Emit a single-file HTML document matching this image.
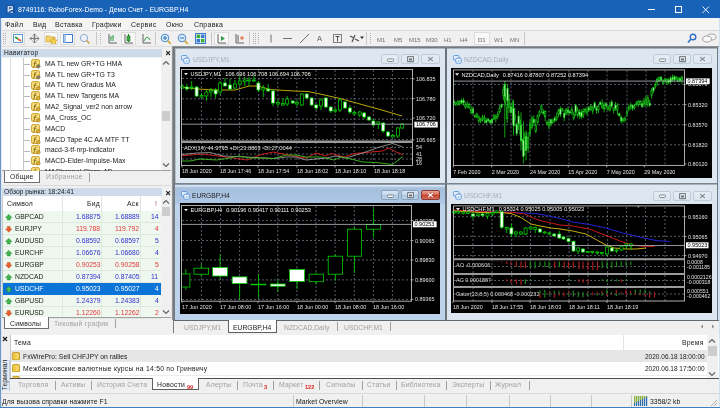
<!DOCTYPE html><html><head><meta charset="utf-8"><style>
html,body{margin:0;padding:0;} body{width:720px;height:408px;position:relative;overflow:hidden;background:#f0f0f0;font-family:"Liberation Sans", sans-serif;-webkit-font-smoothing:antialiased;} .t{will-change:transform;} svg{will-change:transform;} div{box-sizing:border-box;} svg{position:absolute;}
</style></head><body>
<div style="position:absolute;left:0px;top:0px;width:720px;height:18px;background:#1862b8;"></div>
<div style="position:absolute;left:6px;top:4.5px;width:8.5px;height:8.5px;background:#1552a2;"></div>
<svg style="left:6px;top:4.5px" width="9" height="9"><path d="M2.2 7.3V1.8h4v2.6H3.8v1.8" stroke="#fff" stroke-width="1.1" fill="none"/><path d="M4.5 7.2h2.5" stroke="#fff" stroke-width="1"/></svg>
<div class="t" style="position:absolute;left:18px;top:6.8px;font-size:6.9px;line-height:6.9px;color:#fff;white-space:pre;letter-spacing:0px;">8749116: RoboForex-Demo - Демо Счет - EURGBP,H4</div>
<div style="position:absolute;left:648px;top:9px;width:7px;height:1px;background:#fff;"></div>
<div style="position:absolute;left:675px;top:6px;width:7px;height:7px;border:1px solid #fff;"></div>
<svg style="left:702px;top:6px" width="8" height="8"><path d="M0.5 0.5L7 7M7 0.5L0.5 7" stroke="#fff" stroke-width="0.9"/></svg>
<div style="position:absolute;left:1px;top:18px;width:718px;height:12px;background:#f4f4f4;"></div>
<div style="position:absolute;left:1px;top:30px;width:718px;height:1px;background:#d9d9d9;"></div>
<div class="t" style="position:absolute;left:5px;top:21px;font-size:7px;line-height:7px;color:#1a1a1a;white-space:pre;letter-spacing:0.25px;">Файл</div>
<div class="t" style="position:absolute;left:33px;top:21px;font-size:7px;line-height:7px;color:#1a1a1a;white-space:pre;letter-spacing:0.25px;">Вид</div>
<div class="t" style="position:absolute;left:55px;top:21px;font-size:7px;line-height:7px;color:#1a1a1a;white-space:pre;letter-spacing:0.25px;">Вставка</div>
<div class="t" style="position:absolute;left:92px;top:21px;font-size:7px;line-height:7px;color:#1a1a1a;white-space:pre;letter-spacing:0.25px;">Графики</div>
<div class="t" style="position:absolute;left:131px;top:21px;font-size:7px;line-height:7px;color:#1a1a1a;white-space:pre;letter-spacing:0.25px;">Сервис</div>
<div class="t" style="position:absolute;left:166px;top:21px;font-size:7px;line-height:7px;color:#1a1a1a;white-space:pre;letter-spacing:0.25px;">Окно</div>
<div class="t" style="position:absolute;left:194px;top:21px;font-size:7px;line-height:7px;color:#1a1a1a;white-space:pre;letter-spacing:0.25px;">Справка</div>
<div style="position:absolute;left:1px;top:31px;width:718px;height:15px;background:#f0f0f0;"></div>
<div style="position:absolute;left:1px;top:45.5px;width:718px;height:1.5px;background:#dcdcdc;"></div>
<div style="position:absolute;left:0px;top:18px;width:1px;height:390px;background:#7397bd;"></div>
<div style="position:absolute;left:719px;top:18px;width:1px;height:390px;background:#7397bd;"></div>
<div style="position:absolute;left:0px;top:407px;width:720px;height:1px;background:#3f7fc4;"></div>
<div style="position:absolute;left:3px;top:33px;width:1px;height:11px;background:repeating-linear-gradient(#b0b0b0 0 1px, transparent 1px 2px);"></div>
<div style="position:absolute;left:5px;top:33px;width:1px;height:11px;background:repeating-linear-gradient(#b0b0b0 0 1px, transparent 1px 2px);"></div>
<div style="position:absolute;left:11px;top:32px;width:14px;height:13px;background:#f8f8f8;border:1px solid #dcdcdc;"></div>
<div style="position:absolute;left:44px;top:32px;width:14px;height:13px;background:#f8f8f8;border:1px solid #dcdcdc;"></div>
<div style="position:absolute;left:60px;top:32px;width:15px;height:13px;background:#f8f8f8;border:1px solid #dcdcdc;"></div>
<svg style="left:12px;top:33px" width="12" height="11"><rect x="1.5" y="1.5" width="9" height="8" fill="#fff" stroke="#5b9bd5"/><path d="M3 4l3 2" stroke="#2ea043" stroke-width="2"/><path d="M6 6l3 2" stroke="#e06040" stroke-width="2"/></svg>
<svg style="left:29px;top:33px" width="11" height="11"><path d="M5.5 1v9M1 5.5h9" stroke="#707070" stroke-width="0.9"/><path d="M3.8 2.7L5.5 1 7.2 2.7M3.8 8.3L5.5 10 7.2 8.3M2.7 3.8L1 5.5 2.7 7.2M8.3 3.8L10 5.5 8.3 7.2" stroke="#707070" stroke-width="0.9" fill="none"/><path d="M3.5 3.5L7.5 7.5M7.5 3.5L3.5 7.5" stroke="#909090" stroke-width="0.6"/></svg>
<svg style="left:45px;top:33px" width="13" height="11"><path d="M1 3h4l1 1h4v5H1z" fill="#f3d36b" stroke="#c9a23a" stroke-width="0.7"/><path d="M8.5 4.5l1.2 2.3 2.5.3-1.8 1.7.5 2.4-2.4-1.2-2.2 1.2.4-2.4-1.8-1.7 2.5-.3z" fill="#f5d547" stroke="#b89020" stroke-width="0.5"/></svg>
<svg style="left:62px;top:33px" width="12" height="11"><rect x="1.5" y="1.5" width="9" height="8" fill="#fff" stroke="#3c78c8"/><rect x="1.5" y="1.5" width="2.5" height="8" fill="#a8c8ec"/></svg>
<svg style="left:79px;top:33px" width="12" height="11"><circle cx="5" cy="5" r="3.6" fill="#eef3fa" stroke="#8aa7c8"/><path d="M7.5 7.5l3 3" stroke="#c9a23a" stroke-width="1.5"/></svg>
<div style="position:absolute;left:96px;top:32px;width:1px;height:13px;background:#c8c8c8;"></div>
<div style="position:absolute;left:100px;top:33px;width:1px;height:11px;background:repeating-linear-gradient(#b0b0b0 0 1px, transparent 1px 2px);"></div>
<svg style="left:107px;top:33px" width="11" height="11"><path d="M2 1v9h8" stroke="#606060" fill="none"/><path d="M4 3v5M4 5h-1M6 2v6M6 4h1" stroke="#2ea043"/></svg>
<div style="position:absolute;left:121px;top:32px;width:15px;height:13px;background:#f8f8f8;border:1px solid #dcdcdc;"></div>
<svg style="left:123px;top:33px" width="11" height="11"><path d="M2 1v9h8" stroke="#606060" fill="none"/><rect x="4" y="3" width="3" height="5" fill="#3cb040" stroke="#207020" stroke-width="0.6"/><path d="M5.5 1v2M5.5 8v1" stroke="#207020"/></svg>
<svg style="left:141px;top:33px" width="11" height="11"><path d="M2 1v9h8" stroke="#606060" fill="none"/><path d="M3 8q3-7 6-1" stroke="#2ea043" fill="none"/></svg>
<div style="position:absolute;left:155px;top:32px;width:1px;height:13px;background:#c8c8c8;"></div>
<svg style="left:160px;top:33px" width="12" height="12"><circle cx="5" cy="5" r="3.8" fill="#d9ecfb" stroke="#4a8ac8"/><path d="M3 5h4M5 3v4" stroke="#2f6fb8"/><path d="M7.8 7.8l3 3" stroke="#d4a93a" stroke-width="1.8"/></svg>
<svg style="left:177px;top:33px" width="12" height="12"><circle cx="5" cy="5" r="3.8" fill="#d9ecfb" stroke="#4a8ac8"/><path d="M3 5h4" stroke="#2f6fb8"/><path d="M7.8 7.8l3 3" stroke="#d4a93a" stroke-width="1.8"/></svg>
<svg style="left:195px;top:33px" width="11" height="11"><rect x="0.5" y="0.5" width="10" height="10" fill="#fff" stroke="#3a7ad0"/><rect x="1.5" y="1.5" width="3.6" height="3.6" fill="#3cae3c"/><rect x="5.9" y="1.5" width="3.6" height="3.6" fill="#3a7ad0"/><rect x="1.5" y="5.9" width="3.6" height="3.6" fill="#3a7ad0"/><rect x="5.9" y="5.9" width="3.6" height="3.6" fill="#3cae3c"/></svg>
<div style="position:absolute;left:211px;top:32px;width:1px;height:13px;background:#c8c8c8;"></div>
<div style="position:absolute;left:214px;top:32px;width:15px;height:13px;background:#f8f8f8;border:1px solid #dcdcdc;"></div>
<svg style="left:216px;top:33px" width="11" height="11"><path d="M2 1v9h8" stroke="#606060" fill="none"/><path d="M5 3l4 2.5-4 2.5z" fill="#2ea043"/></svg>
<svg style="left:234px;top:33px" width="11" height="11"><path d="M2 1v9h8M4 2v7" stroke="#606060" fill="none"/><path d="M6 5h4M8 3v4" stroke="#e06030"/></svg>
<div style="position:absolute;left:249px;top:32px;width:1px;height:13px;background:#c8c8c8;"></div>
<div style="position:absolute;left:253px;top:33px;width:1px;height:11px;background:repeating-linear-gradient(#b0b0b0 0 1px, transparent 1px 2px);"></div>
<div style="position:absolute;left:255px;top:33px;width:1px;height:11px;background:repeating-linear-gradient(#b0b0b0 0 1px, transparent 1px 2px);"></div>
<div style="position:absolute;left:258px;top:33px;width:1px;height:11px;background:repeating-linear-gradient(#b0b0b0 0 1px, transparent 1px 2px);"></div>
<svg style="left:268px;top:33px" width="6" height="11"><path d="M3 1.5v8" stroke="#707070"/></svg>
<svg style="left:282px;top:33px" width="11" height="11"><path d="M1 5.5h9" stroke="#707070"/></svg>
<svg style="left:299px;top:33px" width="11" height="11"><path d="M1 10L10 1" stroke="#707070"/></svg>
<div class="t" style="position:absolute;left:317px;top:35px;font-size:7.5px;line-height:7.5px;color:#606060;white-space:pre;">A</div>
<svg style="left:332px;top:33px" width="11" height="11"><rect x="1.5" y="1.5" width="8" height="8" fill="none" stroke="#808080"/><path d="M3.5 3.5h4M5.5 3.5v5" stroke="#505050"/></svg>
<svg style="left:349px;top:33px" width="11" height="11"><path d="M1 3l4 2M6 6l4 2M3 9l3-7" stroke="#505050" stroke-width="1.2"/></svg>
<svg style="left:360px;top:36px" width="5" height="4"><path d="M0 0.5h4l-2 2.5z" fill="#303030"/></svg>
<div style="position:absolute;left:366px;top:32px;width:1px;height:13px;background:#c8c8c8;"></div>
<div style="position:absolute;left:370px;top:33px;width:1px;height:11px;background:repeating-linear-gradient(#b0b0b0 0 1px, transparent 1px 2px);"></div>
<div class="t" style="position:absolute;left:377px;top:36.5px;font-size:6px;line-height:6px;color:#707070;white-space:pre;">M1</div>
<div class="t" style="position:absolute;left:394px;top:36.5px;font-size:6px;line-height:6px;color:#707070;white-space:pre;">M5</div>
<div class="t" style="position:absolute;left:409px;top:36.5px;font-size:6px;line-height:6px;color:#707070;white-space:pre;">M15</div>
<div class="t" style="position:absolute;left:426px;top:36.5px;font-size:6px;line-height:6px;color:#707070;white-space:pre;">M30</div>
<div class="t" style="position:absolute;left:444px;top:36.5px;font-size:6px;line-height:6px;color:#707070;white-space:pre;">H1</div>
<div class="t" style="position:absolute;left:460px;top:36.5px;font-size:6px;line-height:6px;color:#707070;white-space:pre;">H4</div>
<div class="t" style="position:absolute;left:478px;top:36.5px;font-size:6px;line-height:6px;color:#707070;white-space:pre;">D1</div>
<div class="t" style="position:absolute;left:494px;top:36.5px;font-size:6px;line-height:6px;color:#707070;white-space:pre;">W1</div>
<div class="t" style="position:absolute;left:510px;top:36.5px;font-size:6px;line-height:6px;color:#707070;white-space:pre;">MN</div>
<div style="position:absolute;left:474px;top:32px;width:16px;height:13px;background:#f8f8f8;border:1px solid #dcdcdc;"></div>
<div class="t" style="position:absolute;left:478px;top:36.5px;font-size:6px;line-height:6px;color:#606060;white-space:pre;">D1</div>
<div style="position:absolute;left:524px;top:32px;width:1px;height:13px;background:#c8c8c8;"></div>
<svg style="left:687px;top:33px" width="10" height="11"><circle cx="6" cy="4" r="2.8" fill="none" stroke="#2f6fc8" stroke-width="1.4"/><path d="M4 6l-3 3.5" stroke="#2f6fc8" stroke-width="1.6"/></svg>
<svg style="left:702px;top:33px" width="15" height="11"><ellipse cx="9.5" cy="4" rx="4.5" ry="3" fill="#f4f4f4" stroke="#a0a0a0"/><ellipse cx="5" cy="6" rx="4.3" ry="3" fill="#f8f8f8" stroke="#a0a0a0"/></svg>
<div style="position:absolute;left:1px;top:47px;width:171px;height:285px;background:#f0f0f0;"></div>
<div style="position:absolute;left:171px;top:47px;width:3px;height:274px;background:#e6e6e6;"></div>
<div style="position:absolute;left:1px;top:48.5px;width:161px;height:8.5px;background:#cddbea;"></div>
<div class="t" style="position:absolute;left:4px;top:49.5px;font-size:6.7px;line-height:6.7px;color:#1a1a1a;white-space:pre;letter-spacing:0.25px;">Навигатор</div>
<svg style="left:165px;top:50px" width="7" height="7"><path d="M1.2 1.2L5 5M5 1.2L1.2 5" stroke="#202020" stroke-width="1.1"/></svg>
<div style="position:absolute;left:1px;top:57.5px;width:170px;height:113.5px;background:#fff;"></div>
<div style="position:absolute;left:1px;top:170px;width:170px;height:1px;background:#a0a0a0;"></div>
<div style="position:absolute;left:10px;top:57.5px;width:1px;height:113px;background:#dcdcdc;"></div>
<div style="position:absolute;left:23px;top:57.5px;width:1px;height:113px;background:#c4c4c4;"></div>
<div style="position:absolute;left:24px;top:64.0px;width:6px;height:0.9px;background:#b8b8b8;"></div>
<svg style="left:31px;top:58.8px" width="10" height="10"><rect x="0.5" y="0.5" width="8" height="8" rx="1.5" fill="#f6dc78" stroke="#d0aa40"/><path d="M5.5 2.2q-1.5-.3-1.7 1.2l-.6 3.8q-.3 1-1.2.8M2.8 4.3h2.5" stroke="#7a5a10" stroke-width="0.8" fill="none"/><circle cx="7.3" cy="7.3" r="1.8" fill="#808080" stroke="#806010" stroke-width="0.5"/></svg>
<div class="t" style="position:absolute;left:44.5px;top:60.8px;font-size:6.9px;line-height:6.9px;color:#1a1a1a;white-space:pre;">MA TL new GR+TG HMA</div>
<div style="position:absolute;left:24px;top:74.83px;width:6px;height:0.9px;background:#b8b8b8;"></div>
<svg style="left:31px;top:69.6px" width="10" height="10"><rect x="0.5" y="0.5" width="8" height="8" rx="1.5" fill="#f6dc78" stroke="#d0aa40"/><path d="M5.5 2.2q-1.5-.3-1.7 1.2l-.6 3.8q-.3 1-1.2.8M2.8 4.3h2.5" stroke="#7a5a10" stroke-width="0.8" fill="none"/><circle cx="7.3" cy="7.3" r="1.8" fill="#808080" stroke="#806010" stroke-width="0.5"/></svg>
<div class="t" style="position:absolute;left:44.5px;top:71.63000000000001px;font-size:6.9px;line-height:6.9px;color:#1a1a1a;white-space:pre;">MA TL new GR+TG T3</div>
<div style="position:absolute;left:24px;top:85.66px;width:6px;height:0.9px;background:#b8b8b8;"></div>
<svg style="left:31px;top:80.5px" width="10" height="10"><rect x="0.5" y="0.5" width="8" height="8" rx="1.5" fill="#f6dc78" stroke="#d0aa40"/><path d="M5.5 2.2q-1.5-.3-1.7 1.2l-.6 3.8q-.3 1-1.2.8M2.8 4.3h2.5" stroke="#7a5a10" stroke-width="0.8" fill="none"/><circle cx="7.3" cy="7.3" r="1.8" fill="#e0b030" stroke="#806010" stroke-width="0.5"/></svg>
<div class="t" style="position:absolute;left:44.5px;top:82.46000000000001px;font-size:6.9px;line-height:6.9px;color:#1a1a1a;white-space:pre;">MA TL new Gradus MA</div>
<div style="position:absolute;left:24px;top:96.49px;width:6px;height:0.9px;background:#b8b8b8;"></div>
<svg style="left:31px;top:91.3px" width="10" height="10"><rect x="0.5" y="0.5" width="8" height="8" rx="1.5" fill="#f6dc78" stroke="#d0aa40"/><path d="M5.5 2.2q-1.5-.3-1.7 1.2l-.6 3.8q-.3 1-1.2.8M2.8 4.3h2.5" stroke="#7a5a10" stroke-width="0.8" fill="none"/><circle cx="7.3" cy="7.3" r="1.8" fill="#e0b030" stroke="#806010" stroke-width="0.5"/></svg>
<div class="t" style="position:absolute;left:44.5px;top:93.29px;font-size:6.9px;line-height:6.9px;color:#1a1a1a;white-space:pre;">MA TL new Tangens MA</div>
<div style="position:absolute;left:24px;top:107.32px;width:6px;height:0.9px;background:#b8b8b8;"></div>
<svg style="left:31px;top:102.1px" width="10" height="10"><rect x="0.5" y="0.5" width="8" height="8" rx="1.5" fill="#f6dc78" stroke="#d0aa40"/><path d="M5.5 2.2q-1.5-.3-1.7 1.2l-.6 3.8q-.3 1-1.2.8M2.8 4.3h2.5" stroke="#7a5a10" stroke-width="0.8" fill="none"/><circle cx="7.3" cy="7.3" r="1.8" fill="#e0b030" stroke="#806010" stroke-width="0.5"/></svg>
<div class="t" style="position:absolute;left:44.5px;top:104.12px;font-size:6.9px;line-height:6.9px;color:#1a1a1a;white-space:pre;">MA2_Signal_ver2 non arrow</div>
<div style="position:absolute;left:24px;top:118.14999999999999px;width:6px;height:0.9px;background:#b8b8b8;"></div>
<svg style="left:31px;top:113.0px" width="10" height="10"><rect x="0.5" y="0.5" width="8" height="8" rx="1.5" fill="#f6dc78" stroke="#d0aa40"/><path d="M5.5 2.2q-1.5-.3-1.7 1.2l-.6 3.8q-.3 1-1.2.8M2.8 4.3h2.5" stroke="#7a5a10" stroke-width="0.8" fill="none"/><circle cx="7.3" cy="7.3" r="1.8" fill="#e0b030" stroke="#806010" stroke-width="0.5"/></svg>
<div class="t" style="position:absolute;left:44.5px;top:114.95px;font-size:6.9px;line-height:6.9px;color:#1a1a1a;white-space:pre;">MA_Cross_OC</div>
<div style="position:absolute;left:24px;top:128.98px;width:6px;height:0.9px;background:#b8b8b8;"></div>
<svg style="left:31px;top:123.8px" width="10" height="10"><rect x="0.5" y="0.5" width="8" height="8" rx="1.5" fill="#f6dc78" stroke="#d0aa40"/><path d="M5.5 2.2q-1.5-.3-1.7 1.2l-.6 3.8q-.3 1-1.2.8M2.8 4.3h2.5" stroke="#7a5a10" stroke-width="0.8" fill="none"/><circle cx="7.3" cy="7.3" r="1.8" fill="#e0b030" stroke="#806010" stroke-width="0.5"/></svg>
<div class="t" style="position:absolute;left:44.5px;top:125.78px;font-size:6.9px;line-height:6.9px;color:#1a1a1a;white-space:pre;">MACD</div>
<div style="position:absolute;left:24px;top:139.81px;width:6px;height:0.9px;background:#b8b8b8;"></div>
<svg style="left:31px;top:134.6px" width="10" height="10"><rect x="0.5" y="0.5" width="8" height="8" rx="1.5" fill="#f6dc78" stroke="#d0aa40"/><path d="M5.5 2.2q-1.5-.3-1.7 1.2l-.6 3.8q-.3 1-1.2.8M2.8 4.3h2.5" stroke="#7a5a10" stroke-width="0.8" fill="none"/><circle cx="7.3" cy="7.3" r="1.8" fill="#e0b030" stroke="#806010" stroke-width="0.5"/></svg>
<div class="t" style="position:absolute;left:44.5px;top:136.61px;font-size:6.9px;line-height:6.9px;color:#1a1a1a;white-space:pre;">MACD Tape 4C AA MTF TT</div>
<div style="position:absolute;left:24px;top:150.64px;width:6px;height:0.9px;background:#b8b8b8;"></div>
<svg style="left:31px;top:145.4px" width="10" height="10"><rect x="0.5" y="0.5" width="8" height="8" rx="1.5" fill="#f6dc78" stroke="#d0aa40"/><path d="M5.5 2.2q-1.5-.3-1.7 1.2l-.6 3.8q-.3 1-1.2.8M2.8 4.3h2.5" stroke="#7a5a10" stroke-width="0.8" fill="none"/><circle cx="7.3" cy="7.3" r="1.8" fill="#e0b030" stroke="#806010" stroke-width="0.5"/></svg>
<div class="t" style="position:absolute;left:44.5px;top:147.44px;font-size:6.9px;line-height:6.9px;color:#1a1a1a;white-space:pre;">macd-3-tf-nrp-indicator</div>
<div style="position:absolute;left:24px;top:161.47px;width:6px;height:0.9px;background:#b8b8b8;"></div>
<svg style="left:31px;top:156.3px" width="10" height="10"><rect x="0.5" y="0.5" width="8" height="8" rx="1.5" fill="#f6dc78" stroke="#d0aa40"/><path d="M5.5 2.2q-1.5-.3-1.7 1.2l-.6 3.8q-.3 1-1.2.8M2.8 4.3h2.5" stroke="#7a5a10" stroke-width="0.8" fill="none"/><circle cx="7.3" cy="7.3" r="1.8" fill="#e0b030" stroke="#806010" stroke-width="0.5"/></svg>
<div class="t" style="position:absolute;left:44.5px;top:158.27px;font-size:6.9px;line-height:6.9px;color:#1a1a1a;white-space:pre;">MACD-Elder-Impulse-Max</div>
<div style="position:absolute;left:24px;top:172.29999999999998px;width:6px;height:0.9px;background:#b8b8b8;"></div>
<svg style="left:31px;top:167.1px" width="10" height="10"><rect x="0.5" y="0.5" width="8" height="8" rx="1.5" fill="#f6dc78" stroke="#d0aa40"/><path d="M5.5 2.2q-1.5-.3-1.7 1.2l-.6 3.8q-.3 1-1.2.8M2.8 4.3h2.5" stroke="#7a5a10" stroke-width="0.8" fill="none"/><circle cx="7.3" cy="7.3" r="1.8" fill="#e0b030" stroke="#806010" stroke-width="0.5"/></svg>
<div class="t" style="position:absolute;left:44.5px;top:169.1px;font-size:6.9px;line-height:6.9px;color:#1a1a1a;white-space:pre;">MAChannel-Close-AD</div>
<div style="position:absolute;left:161px;top:57px;width:10px;height:113px;background:#f0f0f0;"></div>
<svg style="left:162px;top:60px" width="8" height="6"><path d="M1 4.5L4 1.5L7 4.5" stroke="#606060" stroke-width="1.1" fill="none"/></svg>
<svg style="left:162px;top:162px" width="8" height="6"><path d="M1 1.5L4 4.5L7 1.5" stroke="#606060" stroke-width="1.1" fill="none"/></svg>
<div style="position:absolute;left:162px;top:111px;width:8px;height:10px;background:#cdcdcd;"></div>
<div style="position:absolute;left:1px;top:171px;width:170px;height:14px;background:#f0f0f0;"></div>
<div style="position:absolute;left:4px;top:171px;width:36px;height:12px;background:#fff;border:1px solid #707070;border-top:none;"></div>
<div class="t" style="position:absolute;left:10px;top:174px;font-size:6.8px;line-height:6.8px;color:#1a1a1a;white-space:pre;letter-spacing:0.25px;">Общие</div>
<div class="t" style="position:absolute;left:46px;top:174px;font-size:6.8px;line-height:6.8px;color:#a0a0a0;white-space:pre;letter-spacing:0.25px;">Избранное</div>
<div style="position:absolute;left:89px;top:173px;width:1px;height:9px;background:#a0a0a0;"></div>
<div style="position:absolute;left:1px;top:185px;width:170px;height:1px;background:#dadada;"></div>
<div style="position:absolute;left:1px;top:188px;width:161px;height:7.5px;background:#cddbea;"></div>
<div class="t" style="position:absolute;left:4px;top:188.8px;font-size:6.7px;line-height:6.7px;color:#1a1a1a;white-space:pre;letter-spacing:0px;">Обзор рынка: 18:24:41</div>
<svg style="left:165px;top:189.5px" width="7" height="7"><path d="M1.2 1.2L5 5M5 1.2L1.2 5" stroke="#202020" stroke-width="1.1"/></svg>
<div style="position:absolute;left:2px;top:196px;width:169px;height:121px;background:#fff;border-left:1px solid #c8c8c8;"></div>
<div style="position:absolute;left:3px;top:196px;width:158px;height:15px;background:#fff;"></div>
<div style="position:absolute;left:62px;top:196px;width:1px;height:15px;background:#e4e4e4;"></div>
<div style="position:absolute;left:101px;top:196px;width:1px;height:15px;background:#e4e4e4;"></div>
<div style="position:absolute;left:140px;top:196px;width:1px;height:15px;background:#e4e4e4;"></div>
<div class="t" style="position:absolute;left:7px;top:200.6px;font-size:6.8px;line-height:6.8px;color:#1a1a1a;white-space:pre;letter-spacing:0.25px;">Символ</div>
<div class="t" style="position:absolute;right:620.5px;top:200.6px;font-size:6.8px;line-height:6.8px;color:#1a1a1a;white-space:pre;text-align:right;letter-spacing:0.25px;">Бид</div>
<div class="t" style="position:absolute;right:581.5px;top:200.6px;font-size:6.8px;line-height:6.8px;color:#1a1a1a;white-space:pre;text-align:right;letter-spacing:0.25px;">Аск</div>
<div class="t" style="position:absolute;right:563px;top:200.6px;font-size:6.8px;line-height:6.8px;color:#b04848;white-space:pre;text-align:right;">!</div>
<div style="position:absolute;left:3px;top:210.5px;width:158px;height:12px;background:#eef8ee;border-bottom:1px solid #dfe8df;"></div>
<div style="position:absolute;left:62px;top:210.5px;width:1px;height:12px;background:#dfe8df;"></div>
<div style="position:absolute;left:101px;top:210.5px;width:1px;height:12px;background:#dfe8df;"></div>
<div style="position:absolute;left:140px;top:210.5px;width:1px;height:12px;background:#dfe8df;"></div>
<svg style="left:5px;top:213.5px" width="8" height="7"><path d="M3.75 0.4L6.9 3.6H5.2v2.3H2.3V3.6H0.6z" fill="#3ab84a" stroke="#208030" stroke-width="0.5"/></svg>
<div class="t" style="position:absolute;left:15px;top:213.5px;font-size:6.8px;line-height:6.8px;color:#1a1a1a;white-space:pre;">GBPCAD</div>
<div class="t" style="position:absolute;right:619.7px;top:213.5px;font-size:6.8px;line-height:6.8px;color:#3030d0;white-space:pre;text-align:right;">1.68875</div>
<div class="t" style="position:absolute;right:580.7px;top:213.5px;font-size:6.8px;line-height:6.8px;color:#3030d0;white-space:pre;text-align:right;">1.68889</div>
<div class="t" style="position:absolute;right:561.7px;top:213.5px;font-size:6.8px;line-height:6.8px;color:#3030d0;white-space:pre;text-align:right;">14</div>
<div style="position:absolute;left:3px;top:222.5px;width:158px;height:12px;background:#eef8ee;border-bottom:1px solid #dfe8df;"></div>
<div style="position:absolute;left:62px;top:222.5px;width:1px;height:12px;background:#dfe8df;"></div>
<div style="position:absolute;left:101px;top:222.5px;width:1px;height:12px;background:#dfe8df;"></div>
<div style="position:absolute;left:140px;top:222.5px;width:1px;height:12px;background:#dfe8df;"></div>
<svg style="left:5px;top:225.5px" width="8" height="7"><path d="M3.75 6.2L0.6 3H2.3V0.6h2.9V3h1.7z" fill="#e8602c" stroke="#c04818" stroke-width="0.5"/></svg>
<div class="t" style="position:absolute;left:15px;top:225.5px;font-size:6.8px;line-height:6.8px;color:#1a1a1a;white-space:pre;">EURJPY</div>
<div class="t" style="position:absolute;right:619.7px;top:225.5px;font-size:6.8px;line-height:6.8px;color:#e03a3a;white-space:pre;text-align:right;">119.788</div>
<div class="t" style="position:absolute;right:580.7px;top:225.5px;font-size:6.8px;line-height:6.8px;color:#e03a3a;white-space:pre;text-align:right;">119.792</div>
<div class="t" style="position:absolute;right:561.7px;top:225.5px;font-size:6.8px;line-height:6.8px;color:#e03a3a;white-space:pre;text-align:right;">4</div>
<div style="position:absolute;left:3px;top:234.5px;width:158px;height:12px;background:#eef8ee;border-bottom:1px solid #dfe8df;"></div>
<div style="position:absolute;left:62px;top:234.5px;width:1px;height:12px;background:#dfe8df;"></div>
<div style="position:absolute;left:101px;top:234.5px;width:1px;height:12px;background:#dfe8df;"></div>
<div style="position:absolute;left:140px;top:234.5px;width:1px;height:12px;background:#dfe8df;"></div>
<svg style="left:5px;top:237.5px" width="8" height="7"><path d="M3.75 0.4L6.9 3.6H5.2v2.3H2.3V3.6H0.6z" fill="#3ab84a" stroke="#208030" stroke-width="0.5"/></svg>
<div class="t" style="position:absolute;left:15px;top:237.5px;font-size:6.8px;line-height:6.8px;color:#1a1a1a;white-space:pre;">AUDUSD</div>
<div class="t" style="position:absolute;right:619.7px;top:237.5px;font-size:6.8px;line-height:6.8px;color:#3030d0;white-space:pre;text-align:right;">0.68592</div>
<div class="t" style="position:absolute;right:580.7px;top:237.5px;font-size:6.8px;line-height:6.8px;color:#3030d0;white-space:pre;text-align:right;">0.68597</div>
<div class="t" style="position:absolute;right:561.7px;top:237.5px;font-size:6.8px;line-height:6.8px;color:#3030d0;white-space:pre;text-align:right;">5</div>
<div style="position:absolute;left:3px;top:246.5px;width:158px;height:12px;background:#eef8ee;border-bottom:1px solid #dfe8df;"></div>
<div style="position:absolute;left:62px;top:246.5px;width:1px;height:12px;background:#dfe8df;"></div>
<div style="position:absolute;left:101px;top:246.5px;width:1px;height:12px;background:#dfe8df;"></div>
<div style="position:absolute;left:140px;top:246.5px;width:1px;height:12px;background:#dfe8df;"></div>
<svg style="left:5px;top:249.5px" width="8" height="7"><path d="M3.75 0.4L6.9 3.6H5.2v2.3H2.3V3.6H0.6z" fill="#3ab84a" stroke="#208030" stroke-width="0.5"/></svg>
<div class="t" style="position:absolute;left:15px;top:249.5px;font-size:6.8px;line-height:6.8px;color:#1a1a1a;white-space:pre;">EURCHF</div>
<div class="t" style="position:absolute;right:619.7px;top:249.5px;font-size:6.8px;line-height:6.8px;color:#3030d0;white-space:pre;text-align:right;">1.06676</div>
<div class="t" style="position:absolute;right:580.7px;top:249.5px;font-size:6.8px;line-height:6.8px;color:#3030d0;white-space:pre;text-align:right;">1.06680</div>
<div class="t" style="position:absolute;right:561.7px;top:249.5px;font-size:6.8px;line-height:6.8px;color:#3030d0;white-space:pre;text-align:right;">4</div>
<div style="position:absolute;left:3px;top:258.5px;width:158px;height:12px;background:#eef8ee;border-bottom:1px solid #dfe8df;"></div>
<div style="position:absolute;left:62px;top:258.5px;width:1px;height:12px;background:#dfe8df;"></div>
<div style="position:absolute;left:101px;top:258.5px;width:1px;height:12px;background:#dfe8df;"></div>
<div style="position:absolute;left:140px;top:258.5px;width:1px;height:12px;background:#dfe8df;"></div>
<svg style="left:5px;top:261.5px" width="8" height="7"><path d="M3.75 6.2L0.6 3H2.3V0.6h2.9V3h1.7z" fill="#e8602c" stroke="#c04818" stroke-width="0.5"/></svg>
<div class="t" style="position:absolute;left:15px;top:261.5px;font-size:6.8px;line-height:6.8px;color:#1a1a1a;white-space:pre;">EURGBP</div>
<div class="t" style="position:absolute;right:619.7px;top:261.5px;font-size:6.8px;line-height:6.8px;color:#e03a3a;white-space:pre;text-align:right;">0.90253</div>
<div class="t" style="position:absolute;right:580.7px;top:261.5px;font-size:6.8px;line-height:6.8px;color:#e03a3a;white-space:pre;text-align:right;">0.90258</div>
<div class="t" style="position:absolute;right:561.7px;top:261.5px;font-size:6.8px;line-height:6.8px;color:#e03a3a;white-space:pre;text-align:right;">5</div>
<div style="position:absolute;left:3px;top:270.5px;width:158px;height:12px;background:#eef8ee;border-bottom:1px solid #dfe8df;"></div>
<div style="position:absolute;left:62px;top:270.5px;width:1px;height:12px;background:#dfe8df;"></div>
<div style="position:absolute;left:101px;top:270.5px;width:1px;height:12px;background:#dfe8df;"></div>
<div style="position:absolute;left:140px;top:270.5px;width:1px;height:12px;background:#dfe8df;"></div>
<svg style="left:5px;top:273.5px" width="8" height="7"><path d="M3.75 0.4L6.9 3.6H5.2v2.3H2.3V3.6H0.6z" fill="#3ab84a" stroke="#208030" stroke-width="0.5"/></svg>
<div class="t" style="position:absolute;left:15px;top:273.5px;font-size:6.8px;line-height:6.8px;color:#1a1a1a;white-space:pre;">NZDCAD</div>
<div class="t" style="position:absolute;right:619.7px;top:273.5px;font-size:6.8px;line-height:6.8px;color:#3030d0;white-space:pre;text-align:right;">0.87394</div>
<div class="t" style="position:absolute;right:580.7px;top:273.5px;font-size:6.8px;line-height:6.8px;color:#3030d0;white-space:pre;text-align:right;">0.87405</div>
<div class="t" style="position:absolute;right:561.7px;top:273.5px;font-size:6.8px;line-height:6.8px;color:#3030d0;white-space:pre;text-align:right;">11</div>
<div style="position:absolute;left:3px;top:282.5px;width:158px;height:12px;background:#0a74d8;"></div>
<svg style="left:5px;top:285.5px" width="8" height="7"><path d="M3.75 0.4L6.9 3.6H5.2v2.3H2.3V3.6H0.6z" fill="#4cc85c" stroke="#208030" stroke-width="0.5"/></svg>
<div class="t" style="position:absolute;left:15px;top:285.5px;font-size:6.8px;line-height:6.8px;color:#fff;white-space:pre;">USDCHF</div>
<div class="t" style="position:absolute;right:619.7px;top:285.5px;font-size:6.8px;line-height:6.8px;color:#fff;white-space:pre;text-align:right;">0.95023</div>
<div class="t" style="position:absolute;right:580.7px;top:285.5px;font-size:6.8px;line-height:6.8px;color:#fff;white-space:pre;text-align:right;">0.95027</div>
<div class="t" style="position:absolute;right:561.7px;top:285.5px;font-size:6.8px;line-height:6.8px;color:#fff;white-space:pre;text-align:right;">4</div>
<div style="position:absolute;left:3px;top:294.5px;width:158px;height:12px;background:#eef8ee;border-bottom:1px solid #dfe8df;"></div>
<div style="position:absolute;left:62px;top:294.5px;width:1px;height:12px;background:#dfe8df;"></div>
<div style="position:absolute;left:101px;top:294.5px;width:1px;height:12px;background:#dfe8df;"></div>
<div style="position:absolute;left:140px;top:294.5px;width:1px;height:12px;background:#dfe8df;"></div>
<svg style="left:5px;top:297.5px" width="8" height="7"><path d="M3.75 0.4L6.9 3.6H5.2v2.3H2.3V3.6H0.6z" fill="#3ab84a" stroke="#208030" stroke-width="0.5"/></svg>
<div class="t" style="position:absolute;left:15px;top:297.5px;font-size:6.8px;line-height:6.8px;color:#1a1a1a;white-space:pre;">GBPUSD</div>
<div class="t" style="position:absolute;right:619.7px;top:297.5px;font-size:6.8px;line-height:6.8px;color:#3030d0;white-space:pre;text-align:right;">1.24379</div>
<div class="t" style="position:absolute;right:580.7px;top:297.5px;font-size:6.8px;line-height:6.8px;color:#3030d0;white-space:pre;text-align:right;">1.24383</div>
<div class="t" style="position:absolute;right:561.7px;top:297.5px;font-size:6.8px;line-height:6.8px;color:#3030d0;white-space:pre;text-align:right;">4</div>
<div style="position:absolute;left:3px;top:306.5px;width:158px;height:12px;background:#eef8ee;border-bottom:1px solid #dfe8df;"></div>
<div style="position:absolute;left:62px;top:306.5px;width:1px;height:12px;background:#dfe8df;"></div>
<div style="position:absolute;left:101px;top:306.5px;width:1px;height:12px;background:#dfe8df;"></div>
<div style="position:absolute;left:140px;top:306.5px;width:1px;height:12px;background:#dfe8df;"></div>
<svg style="left:5px;top:309.5px" width="8" height="7"><path d="M3.75 6.2L0.6 3H2.3V0.6h2.9V3h1.7z" fill="#e8602c" stroke="#c04818" stroke-width="0.5"/></svg>
<div class="t" style="position:absolute;left:15px;top:309.5px;font-size:6.8px;line-height:6.8px;color:#1a1a1a;white-space:pre;">EURUSD</div>
<div class="t" style="position:absolute;right:619.7px;top:309.5px;font-size:6.8px;line-height:6.8px;color:#e03a3a;white-space:pre;text-align:right;">1.12260</div>
<div class="t" style="position:absolute;right:580.7px;top:309.5px;font-size:6.8px;line-height:6.8px;color:#e03a3a;white-space:pre;text-align:right;">1.12262</div>
<div class="t" style="position:absolute;right:561.7px;top:309.5px;font-size:6.8px;line-height:6.8px;color:#e03a3a;white-space:pre;text-align:right;">2</div>
<div style="position:absolute;left:161px;top:196px;width:10px;height:121px;background:#f0f0f0;"></div>
<svg style="left:162px;top:199px" width="8" height="6"><path d="M1 4.5L4 1.5L7 4.5" stroke="#606060" stroke-width="1.1" fill="none"/></svg>
<svg style="left:162px;top:309px" width="8" height="6"><path d="M1 1.5L4 4.5L7 1.5" stroke="#606060" stroke-width="1.1" fill="none"/></svg>
<div style="position:absolute;left:162px;top:207px;width:8px;height:9px;background:#cdcdcd;"></div>
<div style="position:absolute;left:2px;top:316.5px;width:169px;height:1px;background:#a0a0a0;"></div>
<div style="position:absolute;left:4px;top:317px;width:45px;height:12px;background:#fff;border:1px solid #707070;border-top:none;"></div>
<div class="t" style="position:absolute;left:10px;top:321px;font-size:6.8px;line-height:6.8px;color:#1a1a1a;white-space:pre;letter-spacing:0.25px;">Символы</div>
<div class="t" style="position:absolute;left:54px;top:321px;font-size:6.8px;line-height:6.8px;color:#a0a0a0;white-space:pre;letter-spacing:0.25px;">Тиковый график</div>
<div style="position:absolute;left:115px;top:319px;width:1px;height:9px;background:#a0a0a0;"></div>
<div style="position:absolute;left:1px;top:332px;width:173px;height:1px;background:#d8d8d8;"></div>
<div style="position:absolute;left:172px;top:46px;width:548px;height:275px;background:#8a949e;"></div>
<div style="position:absolute;left:174.5px;top:48px;width:271.5px;height:136px;background:linear-gradient(#dfe8f1 0px,#dbe5ef 20px,#dde7f1 100%);border-right:1px solid #9aa2aa;border-bottom:1px solid #9aa2aa;border-top:1px solid #a8b0b8;border-left:1px solid #b8c0c8;"></div>
<svg style="left:181.0px;top:55px" width="9" height="9"><rect x="0.5" y="0.5" width="5.5" height="4.5" rx="1" fill="#e4eef8" stroke="#5a94d8" stroke-width="0.9"/><rect x="2.8" y="3.2" width="5.5" height="5" rx="1" fill="#f2f7fc" stroke="#5a94d8" stroke-width="0.9"/><path d="M4 6.6l1-1 1 .8 1.2-1.4" stroke="#5a94d8" stroke-width="0.6" fill="none"/></svg>
<div class="t" style="position:absolute;left:192.5px;top:57.3px;font-size:6.7px;line-height:6.7px;color:#a8aeb4;white-space:pre;">USDJPY,M1</div>
<div style="position:absolute;left:380.8px;top:54.3px;width:18.7px;height:10px;background:linear-gradient(#e4ecf4,#dde6ef);border:1px solid #c0ccd8;border-radius:2px;"></div>
<div style="position:absolute;left:400.8px;top:54.3px;width:18.7px;height:10px;background:linear-gradient(#e4ecf4,#dde6ef);border:1px solid #c0ccd8;border-radius:2px;"></div>
<div style="position:absolute;left:421.3px;top:54.3px;width:18.7px;height:10px;background:linear-gradient(#e4ecf4,#dde6ef);border:1px solid #c0ccd8;border-radius:2px;"></div>
<svg style="left:386.8px;top:58.099999999999994px" width="8" height="5"><rect x="0.5" y="1" width="6" height="2.5" rx="1" fill="#fff" stroke="#606870" stroke-width="0.8"/></svg>
<svg style="left:406.8px;top:56.3px" width="8" height="7"><rect x="0.7" y="0.7" width="5.6" height="5" fill="#fff" stroke="#606870" stroke-width="1"/><rect x="2" y="2.5" width="3" height="2" fill="#606870"/></svg>
<svg style="left:427.3px;top:56.3px" width="7" height="6"><path d="M1.2 1L5.8 5M5.8 1L1.2 5" stroke="#e8eef4" stroke-width="2.2"/><path d="M1.2 1L5.8 5M5.8 1L1.2 5" stroke="#8a9098" stroke-width="1.1"/></svg>
<div style="position:absolute;left:446px;top:48px;width:272px;height:136px;background:linear-gradient(#dfe8f1 0px,#dbe5ef 20px,#dde7f1 100%);border-right:1px solid #9aa2aa;border-bottom:1px solid #9aa2aa;border-top:1px solid #a8b0b8;border-left:1px solid #b8c0c8;"></div>
<svg style="left:452.5px;top:55px" width="9" height="9"><rect x="0.5" y="0.5" width="5.5" height="4.5" rx="1" fill="#e4eef8" stroke="#5a94d8" stroke-width="0.9"/><rect x="2.8" y="3.2" width="5.5" height="5" rx="1" fill="#f2f7fc" stroke="#5a94d8" stroke-width="0.9"/><path d="M4 6.6l1-1 1 .8 1.2-1.4" stroke="#5a94d8" stroke-width="0.6" fill="none"/></svg>
<div class="t" style="position:absolute;left:464px;top:57.3px;font-size:6.7px;line-height:6.7px;color:#a8aeb4;white-space:pre;">NZDCAD,Daily</div>
<div style="position:absolute;left:652.5px;top:54.3px;width:18.7px;height:10px;background:linear-gradient(#e4ecf4,#dde6ef);border:1px solid #c0ccd8;border-radius:2px;"></div>
<div style="position:absolute;left:672.5px;top:54.3px;width:18.7px;height:10px;background:linear-gradient(#e4ecf4,#dde6ef);border:1px solid #c0ccd8;border-radius:2px;"></div>
<div style="position:absolute;left:693.0px;top:54.3px;width:18.7px;height:10px;background:linear-gradient(#e4ecf4,#dde6ef);border:1px solid #c0ccd8;border-radius:2px;"></div>
<svg style="left:658.5px;top:58.099999999999994px" width="8" height="5"><rect x="0.5" y="1" width="6" height="2.5" rx="1" fill="#fff" stroke="#606870" stroke-width="0.8"/></svg>
<svg style="left:678.5px;top:56.3px" width="8" height="7"><rect x="0.7" y="0.7" width="5.6" height="5" fill="#fff" stroke="#606870" stroke-width="1"/><rect x="2" y="2.5" width="3" height="2" fill="#606870"/></svg>
<svg style="left:699.0px;top:56.3px" width="7" height="6"><path d="M1.2 1L5.8 5M5.8 1L1.2 5" stroke="#e8eef4" stroke-width="2.2"/><path d="M1.2 1L5.8 5M5.8 1L1.2 5" stroke="#8a9098" stroke-width="1.1"/></svg>
<div style="position:absolute;left:174px;top:184px;width:272px;height:137px;background:linear-gradient(#e4eef8 0px,#a6bfdc 3px,#aec7e4 18px,#bcd3eb 20px,#bcd3eb 100%);border-right:1px solid #3a4a58;border-bottom:1px solid #3a4a58;border-top:1px solid #8a9aaa;border-left:1px solid #8a9aaa;"></div>
<svg style="left:180.5px;top:191px" width="9" height="9"><rect x="0.5" y="0.5" width="5.5" height="4.5" rx="1" fill="#e4eef8" stroke="#5a94d8" stroke-width="0.9"/><rect x="2.8" y="3.2" width="5.5" height="5" rx="1" fill="#f2f7fc" stroke="#5a94d8" stroke-width="0.9"/><path d="M4 6.6l1-1 1 .8 1.2-1.4" stroke="#5a94d8" stroke-width="0.6" fill="none"/></svg>
<div class="t" style="position:absolute;left:192px;top:193.3px;font-size:6.7px;line-height:6.7px;color:#1e1e1e;white-space:pre;">EURGBP,H4</div>
<div style="position:absolute;left:380.8px;top:190px;width:18.7px;height:10px;background:linear-gradient(#d8e6f4 0%,#c4d8ee 45%,#b0c8e4 55%,#bcd2ea 100%);border:1px solid #8aa2bc;border-radius:2px;"></div>
<div style="position:absolute;left:400.8px;top:190px;width:18.7px;height:10px;background:linear-gradient(#d8e6f4 0%,#c4d8ee 45%,#b0c8e4 55%,#bcd2ea 100%);border:1px solid #8aa2bc;border-radius:2px;"></div>
<div style="position:absolute;left:421.3px;top:190px;width:18.7px;height:10px;background:linear-gradient(#e8a898 0%,#d86850 45%,#c8402c 55%,#d87060 100%);border:1px solid #8a3a30;border-radius:2px;"></div>
<svg style="left:386.8px;top:193.8px" width="8" height="5"><rect x="0.5" y="1" width="6" height="2.5" rx="1" fill="#fff" stroke="#606870" stroke-width="0.8"/></svg>
<svg style="left:406.8px;top:192px" width="8" height="7"><rect x="0.7" y="0.7" width="5.6" height="5" fill="#fff" stroke="#606870" stroke-width="1"/><rect x="2" y="2.5" width="3" height="2" fill="#606870"/></svg>
<svg style="left:427.3px;top:192px" width="7" height="6"><path d="M1.2 1L5.8 5M5.8 1L1.2 5" stroke="#8a3a30" stroke-width="2.2"/><path d="M1.2 1L5.8 5M5.8 1L1.2 5" stroke="#fff" stroke-width="1.1"/></svg>
<div style="position:absolute;left:446px;top:184px;width:272px;height:137px;background:linear-gradient(#dfe8f1 0px,#dbe5ef 20px,#dde7f1 100%);border-right:1px solid #9aa2aa;border-bottom:1px solid #9aa2aa;border-top:1px solid #a8b0b8;border-left:1px solid #b8c0c8;"></div>
<svg style="left:452.5px;top:191px" width="9" height="9"><rect x="0.5" y="0.5" width="5.5" height="4.5" rx="1" fill="#e4eef8" stroke="#5a94d8" stroke-width="0.9"/><rect x="2.8" y="3.2" width="5.5" height="5" rx="1" fill="#f2f7fc" stroke="#5a94d8" stroke-width="0.9"/><path d="M4 6.6l1-1 1 .8 1.2-1.4" stroke="#5a94d8" stroke-width="0.6" fill="none"/></svg>
<div class="t" style="position:absolute;left:464px;top:193.3px;font-size:6.7px;line-height:6.7px;color:#a8aeb4;white-space:pre;">USDCHF,M1</div>
<div style="position:absolute;left:652.5px;top:190.5px;width:18.7px;height:10px;background:linear-gradient(#e4ecf4,#dde6ef);border:1px solid #c0ccd8;border-radius:2px;"></div>
<div style="position:absolute;left:672.5px;top:190.5px;width:18.7px;height:10px;background:linear-gradient(#e4ecf4,#dde6ef);border:1px solid #c0ccd8;border-radius:2px;"></div>
<div style="position:absolute;left:693.0px;top:190.5px;width:18.7px;height:10px;background:linear-gradient(#e4ecf4,#dde6ef);border:1px solid #c0ccd8;border-radius:2px;"></div>
<svg style="left:658.5px;top:194.3px" width="8" height="5"><rect x="0.5" y="1" width="6" height="2.5" rx="1" fill="#fff" stroke="#606870" stroke-width="0.8"/></svg>
<svg style="left:678.5px;top:192.5px" width="8" height="7"><rect x="0.7" y="0.7" width="5.6" height="5" fill="#fff" stroke="#606870" stroke-width="1"/><rect x="2" y="2.5" width="3" height="2" fill="#606870"/></svg>
<svg style="left:699.0px;top:192.5px" width="7" height="6"><path d="M1.2 1L5.8 5M5.8 1L1.2 5" stroke="#e8eef4" stroke-width="2.2"/><path d="M1.2 1L5.8 5M5.8 1L1.2 5" stroke="#8a9098" stroke-width="1.1"/></svg>
<div style="position:absolute;left:444.8px;top:47px;width:1.8px;height:274px;background:#6a727a;"></div>
<div style="position:absolute;left:172px;top:183px;width:548px;height:1px;background:#7a848e;"></div>
<div style="position:absolute;left:173px;top:47px;width:1.5px;height:274px;background:#7a7a7a;"></div>
<div style="position:absolute;left:173px;top:47px;width:546px;height:1.2px;background:#7a7a7a;"></div>
<div style="position:absolute;left:716.8px;top:47px;width:1px;height:274px;background:#727a82;"></div>
<div style="position:absolute;left:717.8px;top:47px;width:1.2px;height:274px;background:#d0e0f0;"></div>
<svg style="left:180px;top:67px" width="260" height="111" viewBox="180 67 260 111" font-family='"Liberation Sans", sans-serif'>
<rect x="180" y="67" width="260" height="111" fill="#000"/>
<path d="M201.4 70V165" stroke="#6c7480" stroke-width="0.8" stroke-dasharray="2 2"/>
<path d="M220.5 70V165" stroke="#6c7480" stroke-width="0.8" stroke-dasharray="2 2"/>
<path d="M239.6 70V165" stroke="#6c7480" stroke-width="0.8" stroke-dasharray="2 2"/>
<path d="M258.7 70V165" stroke="#6c7480" stroke-width="0.8" stroke-dasharray="2 2"/>
<path d="M277.8 70V165" stroke="#6c7480" stroke-width="0.8" stroke-dasharray="2 2"/>
<path d="M296.9 70V165" stroke="#6c7480" stroke-width="0.8" stroke-dasharray="2 2"/>
<path d="M316.0 70V165" stroke="#6c7480" stroke-width="0.8" stroke-dasharray="2 2"/>
<path d="M335.1 70V165" stroke="#6c7480" stroke-width="0.8" stroke-dasharray="2 2"/>
<path d="M354.2 70V165" stroke="#6c7480" stroke-width="0.8" stroke-dasharray="2 2"/>
<path d="M373.3 70V165" stroke="#6c7480" stroke-width="0.8" stroke-dasharray="2 2"/>
<path d="M392.4 70V165" stroke="#6c7480" stroke-width="0.8" stroke-dasharray="2 2"/>
<path d="M182 78.5H412" stroke="#6c7480" stroke-width="0.8" stroke-dasharray="2 2"/>
<path d="M182 98.8H412" stroke="#6c7480" stroke-width="0.8" stroke-dasharray="2 2"/>
<path d="M182 119.2H412" stroke="#6c7480" stroke-width="0.8" stroke-dasharray="2 2"/>
<path d="M182 139.4H412" stroke="#6c7480" stroke-width="0.8" stroke-dasharray="2 2"/>
<path d="M182 147.5H412" stroke="#6c7480" stroke-width="0.8" stroke-dasharray="2 2"/>
<path d="M182 154H412" stroke="#6c7480" stroke-width="0.8" stroke-dasharray="2 2"/>
<path d="M182 159H412" stroke="#6c7480" stroke-width="0.8" stroke-dasharray="2 2"/>
<path d="M181 87 L198 89 L215 90 L235 90 L249 86 L258 86 L270 89.5 L294 91 L308 91.5 L320 94 L340 98.5 L360 104 L380 109.5 L402 116" stroke="#b8a800" stroke-width="1.0" fill="none" stroke-linejoin="round"/>
<path d="M182.3 84V89" stroke="#00e000" stroke-width="0.8"/>
<rect x="180.8" y="86" width="3.0" height="2" fill="#000" stroke="#00e000" stroke-width="0.7"/>
<path d="M186.8 84V91" stroke="#00e000" stroke-width="0.8"/>
<rect x="185.3" y="87" width="3.0" height="2" fill="#fff" stroke="#00e000" stroke-width="0.7"/>
<path d="M191.7 81V90" stroke="#00e000" stroke-width="0.8"/>
<rect x="190.2" y="87" width="3.0" height="1" fill="#000" stroke="#00e000" stroke-width="0.7"/>
<path d="M196.6 86V97" stroke="#00e000" stroke-width="0.8"/>
<rect x="195.1" y="87" width="3.0" height="9" fill="#fff" stroke="#00e000" stroke-width="0.7"/>
<path d="M201.5 93V98" stroke="#00e000" stroke-width="0.8"/>
<rect x="200.0" y="95.5" width="3.0" height="1.5" fill="#000" stroke="#00e000" stroke-width="0.7"/>
<path d="M206.4 90V101" stroke="#00e000" stroke-width="0.8"/>
<rect x="204.9" y="92" width="3.0" height="4" fill="#000" stroke="#00e000" stroke-width="0.7"/>
<path d="M211 88V97" stroke="#00e000" stroke-width="0.8"/>
<rect x="209.5" y="90.5" width="3.0" height="1.5" fill="#000" stroke="#00e000" stroke-width="0.7"/>
<path d="M215.6 88V98" stroke="#00e000" stroke-width="0.8"/>
<rect x="214.1" y="90" width="3.0" height="4" fill="#fff" stroke="#00e000" stroke-width="0.7"/>
<path d="M220.2 81V95" stroke="#00e000" stroke-width="0.8"/>
<rect x="218.7" y="83" width="3.0" height="9" fill="#000" stroke="#00e000" stroke-width="0.7"/>
<path d="M225 78V86" stroke="#00e000" stroke-width="0.8"/>
<rect x="223.5" y="83" width="3.0" height="3" fill="#fff" stroke="#00e000" stroke-width="0.7"/>
<path d="M230 79V90" stroke="#00e000" stroke-width="0.8"/>
<rect x="228.5" y="85" width="3.0" height="4" fill="#fff" stroke="#00e000" stroke-width="0.7"/>
<path d="M234.9 80V89" stroke="#00e000" stroke-width="0.8"/>
<rect x="233.4" y="84" width="3.0" height="4" fill="#000" stroke="#00e000" stroke-width="0.7"/>
<path d="M239.8 76V86" stroke="#00e000" stroke-width="0.8"/>
<rect x="238.3" y="81" width="3.0" height="3" fill="#000" stroke="#00e000" stroke-width="0.7"/>
<path d="M244.7 77V86" stroke="#00e000" stroke-width="0.8"/>
<rect x="243.2" y="80" width="3.0" height="1.5" fill="#000" stroke="#00e000" stroke-width="0.7"/>
<path d="M249 77V86" stroke="#00e000" stroke-width="0.8"/>
<rect x="247.5" y="80" width="3.0" height="1" fill="#000" stroke="#00e000" stroke-width="0.7"/>
<path d="M254 75V82" stroke="#00e000" stroke-width="0.8"/>
<rect x="252.5" y="80" width="3.0" height="1" fill="#000" stroke="#00e000" stroke-width="0.7"/>
<path d="M258.4 81V92" stroke="#00e000" stroke-width="0.8"/>
<rect x="256.9" y="83" width="3.0" height="7" fill="#fff" stroke="#00e000" stroke-width="0.7"/>
<path d="M263.3 85V97" stroke="#00e000" stroke-width="0.8"/>
<rect x="261.8" y="88" width="3.0" height="2" fill="#000" stroke="#00e000" stroke-width="0.7"/>
<path d="M268.2 84V92" stroke="#00e000" stroke-width="0.8"/>
<rect x="266.7" y="89" width="3.0" height="2" fill="#fff" stroke="#00e000" stroke-width="0.7"/>
<path d="M273 90V106" stroke="#00e000" stroke-width="0.8"/>
<rect x="271.5" y="91" width="3.0" height="12" fill="#fff" stroke="#00e000" stroke-width="0.7"/>
<path d="M278 100V106" stroke="#00e000" stroke-width="0.8"/>
<rect x="276.5" y="102.5" width="3.0" height="1.5" fill="#000" stroke="#00e000" stroke-width="0.7"/>
<path d="M283 98V106" stroke="#00e000" stroke-width="0.8"/>
<rect x="281.5" y="103.5" width="3.0" height="1.5" fill="#000" stroke="#00e000" stroke-width="0.7"/>
<path d="M287.2 96V106" stroke="#00e000" stroke-width="0.8"/>
<rect x="285.7" y="99" width="3.0" height="5" fill="#000" stroke="#00e000" stroke-width="0.7"/>
<path d="M292.7 100V104" stroke="#00e000" stroke-width="0.8"/>
<rect x="291.2" y="101" width="3.0" height="2" fill="#fff" stroke="#00e000" stroke-width="0.7"/>
<path d="M297 100V106" stroke="#00e000" stroke-width="0.8"/>
<rect x="295.5" y="102.5" width="3.0" height="1.5" fill="#000" stroke="#00e000" stroke-width="0.7"/>
<path d="M301.8 93V106" stroke="#00e000" stroke-width="0.8"/>
<rect x="300.3" y="94" width="3.0" height="11" fill="#000" stroke="#00e000" stroke-width="0.7"/>
<path d="M306.7 93V99" stroke="#00e000" stroke-width="0.8"/>
<rect x="305.2" y="94" width="3.0" height="4" fill="#fff" stroke="#00e000" stroke-width="0.7"/>
<path d="M311.6 97V106" stroke="#00e000" stroke-width="0.8"/>
<rect x="310.1" y="98" width="3.0" height="7" fill="#fff" stroke="#00e000" stroke-width="0.7"/>
<path d="M316.2 104V110" stroke="#00e000" stroke-width="0.8"/>
<rect x="314.7" y="105" width="3.0" height="3" fill="#fff" stroke="#00e000" stroke-width="0.7"/>
<path d="M321 98V110" stroke="#00e000" stroke-width="0.8"/>
<rect x="319.5" y="100" width="3.0" height="6" fill="#000" stroke="#00e000" stroke-width="0.7"/>
<path d="M325.8 97V108" stroke="#00e000" stroke-width="0.8"/>
<rect x="324.3" y="98" width="3.0" height="9" fill="#fff" stroke="#00e000" stroke-width="0.7"/>
<path d="M330.7 106V113" stroke="#00e000" stroke-width="0.8"/>
<rect x="329.2" y="107" width="3.0" height="4" fill="#fff" stroke="#00e000" stroke-width="0.7"/>
<path d="M335.2 108V113" stroke="#00e000" stroke-width="0.8"/>
<rect x="333.7" y="110" width="3.0" height="1" fill="#000" stroke="#00e000" stroke-width="0.7"/>
<path d="M340 98V112" stroke="#00e000" stroke-width="0.8"/>
<rect x="338.5" y="100" width="3.0" height="10" fill="#000" stroke="#00e000" stroke-width="0.7"/>
<path d="M345 101V109" stroke="#00e000" stroke-width="0.8"/>
<rect x="343.5" y="102" width="3.0" height="6" fill="#fff" stroke="#00e000" stroke-width="0.7"/>
<path d="M349.9 105V114" stroke="#00e000" stroke-width="0.8"/>
<rect x="348.4" y="108" width="3.0" height="4" fill="#fff" stroke="#00e000" stroke-width="0.7"/>
<path d="M354.4 111V115" stroke="#00e000" stroke-width="0.8"/>
<rect x="352.9" y="112.5" width="3.0" height="1.5" fill="#000" stroke="#00e000" stroke-width="0.7"/>
<path d="M359.7 111V117" stroke="#00e000" stroke-width="0.8"/>
<rect x="358.2" y="112" width="3.0" height="3" fill="#000" stroke="#00e000" stroke-width="0.7"/>
<path d="M364.2 112V119" stroke="#00e000" stroke-width="0.8"/>
<rect x="362.7" y="113" width="3.0" height="4" fill="#fff" stroke="#00e000" stroke-width="0.7"/>
<path d="M369.1 116V121" stroke="#00e000" stroke-width="0.8"/>
<rect x="367.6" y="117" width="3.0" height="3" fill="#fff" stroke="#00e000" stroke-width="0.7"/>
<path d="M373.4 119V126" stroke="#00e000" stroke-width="0.8"/>
<rect x="371.9" y="121" width="3.0" height="4" fill="#fff" stroke="#00e000" stroke-width="0.7"/>
<path d="M378.3 121V129" stroke="#00e000" stroke-width="0.8"/>
<rect x="376.8" y="122" width="3.0" height="2" fill="#000" stroke="#00e000" stroke-width="0.7"/>
<path d="M383.2 122V133" stroke="#00e000" stroke-width="0.8"/>
<rect x="381.7" y="123" width="3.0" height="8" fill="#fff" stroke="#00e000" stroke-width="0.7"/>
<path d="M388.1 131V137" stroke="#00e000" stroke-width="0.8"/>
<rect x="386.6" y="132" width="3.0" height="4" fill="#fff" stroke="#00e000" stroke-width="0.7"/>
<path d="M393 134V137.5" stroke="#00e000" stroke-width="0.8"/>
<rect x="391.5" y="135.5" width="3.0" height="1.5" fill="#000" stroke="#00e000" stroke-width="0.7"/>
<path d="M397.9 127V138" stroke="#00e000" stroke-width="0.8"/>
<rect x="396.4" y="128" width="3.0" height="8" fill="#000" stroke="#00e000" stroke-width="0.7"/>
<path d="M402.2 123V129" stroke="#00e000" stroke-width="0.8"/>
<rect x="400.7" y="124" width="3.0" height="4" fill="#000" stroke="#00e000" stroke-width="0.7"/>
<path d="M181.5 124.2H412.5" stroke="#b8bcc4" stroke-width="0.8"/>
<rect x="181.5" y="69.5" width="231" height="96" fill="none" stroke="#c0c0c0" stroke-width="0.9"/>
<rect x="181.5" y="140.5" width="231" height="2.5" fill="#9a9a9a"/>
<path d="M182 155.8 L190 155 L201.7 154 L218 156 L230 157.5 L247 160 L260 155 L273 152 L283 154 L296 156.5 L306 158 L316 153 L326 156 L331 153.5 L344.3 157 L354.3 153.5 L366 152.5 L382.7 151 L388.5 148 L396 152 L402.7 154.5" stroke="#e02020" stroke-width="0.9" fill="none" stroke-linejoin="round"/>
<path d="M182 154.5 L196.7 153 L210 152.5 L223.3 156 L246.7 157 L273.3 158.5 L286.7 157 L296 157 L306 160 L326 158 L336 156 L346 158 L362.7 153 L379.3 147 L392.7 143.5 L402.7 147" stroke="#a8a8a8" stroke-width="0.8" fill="none" stroke-linejoin="round"/>
<path d="M182 161 L190 161 L200 159 L216.7 160 L230 158 L238.3 156 L250 158 L263.3 158 L273.3 158.5 L286.7 155 L296 155 L306 157 L321 157 L334.3 160 L341 157 L351 159 L362.7 162 L376 162.5 L392.7 164.5 L402.7 156.5" stroke="#40c020" stroke-width="0.9" fill="none" stroke-linejoin="round"/>
<path d="M184 72.9h4l-2 2.4z" fill="#e8e8e8"/>
<text x="190.5" y="76.2" font-size="5.6" fill="#f0f0ec" xml:space="preserve">USDJPY,M1  <tspan dx="1">106.696 106.708 106.694 106.706</tspan></text>
<text x="184" y="149.5" font-size="5.7" fill="#e0e0e0" text-anchor="start">ADX(14) 44.9795 +DI:23.8803 -DI:27.0044</text>
<path d="M412.5 78.8h2" stroke="#c0c0c0" stroke-width="0.8"/>
<text x="416" y="80.8" font-size="5.4" fill="#e0e0dc" text-anchor="start">106.835</text>
<path d="M412.5 98.5h2" stroke="#c0c0c0" stroke-width="0.8"/>
<text x="416" y="100.5" font-size="5.4" fill="#e0e0dc" text-anchor="start">106.780</text>
<path d="M412.5 118.2h2" stroke="#c0c0c0" stroke-width="0.8"/>
<text x="416" y="120.2" font-size="5.4" fill="#e0e0dc" text-anchor="start">106.720</text>
<path d="M412.5 139.8h2" stroke="#c0c0c0" stroke-width="0.8"/>
<text x="416" y="141.8" font-size="5.4" fill="#e0e0dc" text-anchor="start">106.665</text>
<rect x="414.4" y="121.7" width="23.3" height="5.8" fill="#fff"/>
<text x="415.9" y="126.3" font-size="5.5" fill="#000" text-anchor="start">106.706</text>
<text x="416" y="148.5" font-size="5.4" fill="#e0e0dc" text-anchor="start">54</text>
<text x="416" y="155.5" font-size="5.4" fill="#e0e0dc" text-anchor="start">41</text>
<text x="416" y="160.5" font-size="5.4" fill="#e0e0dc" text-anchor="start">28</text>
<text x="416" y="165" font-size="5.4" fill="#e0e0dc" text-anchor="start">16</text>
<path d="M182 165.5v2" stroke="#c0c0c0" stroke-width="0.8"/>
<text x="182" y="172.5" font-size="5.4" fill="#e0e0dc" text-anchor="start">18 Jun 2020</text>
<path d="M220 165.5v2" stroke="#c0c0c0" stroke-width="0.8"/>
<text x="220" y="172.5" font-size="5.4" fill="#e0e0dc" text-anchor="start">18 Jun 17:46</text>
<path d="M258 165.5v2" stroke="#c0c0c0" stroke-width="0.8"/>
<text x="258" y="172.5" font-size="5.4" fill="#e0e0dc" text-anchor="start">18 Jun 17:54</text>
<path d="M297 165.5v2" stroke="#c0c0c0" stroke-width="0.8"/>
<text x="297" y="172.5" font-size="5.4" fill="#e0e0dc" text-anchor="start">18 Jun 18:02</text>
<path d="M335 165.5v2" stroke="#c0c0c0" stroke-width="0.8"/>
<text x="335" y="172.5" font-size="5.4" fill="#e0e0dc" text-anchor="start">18 Jun 18:10</text>
<path d="M374 165.5v2" stroke="#c0c0c0" stroke-width="0.8"/>
<text x="374" y="172.5" font-size="5.4" fill="#e0e0dc" text-anchor="start">18 Jun 18:18</text>
</svg>
<svg style="left:451px;top:67.6px" width="261" height="110.4" viewBox="451 67.6 261 110.4" font-family='"Liberation Sans", sans-serif'>
<rect x="451" y="67.6" width="261" height="110.4" fill="#000"/>
<path d="M473 70V164" stroke="#6c7480" stroke-width="0.8" stroke-dasharray="2 2"/>
<path d="M492 70V164" stroke="#6c7480" stroke-width="0.8" stroke-dasharray="2 2"/>
<path d="M511 70V164" stroke="#6c7480" stroke-width="0.8" stroke-dasharray="2 2"/>
<path d="M530 70V164" stroke="#6c7480" stroke-width="0.8" stroke-dasharray="2 2"/>
<path d="M549 70V164" stroke="#6c7480" stroke-width="0.8" stroke-dasharray="2 2"/>
<path d="M569 70V164" stroke="#6c7480" stroke-width="0.8" stroke-dasharray="2 2"/>
<path d="M588 70V164" stroke="#6c7480" stroke-width="0.8" stroke-dasharray="2 2"/>
<path d="M607 70V164" stroke="#6c7480" stroke-width="0.8" stroke-dasharray="2 2"/>
<path d="M627 70V164" stroke="#6c7480" stroke-width="0.8" stroke-dasharray="2 2"/>
<path d="M646 70V164" stroke="#6c7480" stroke-width="0.8" stroke-dasharray="2 2"/>
<path d="M665 70V164" stroke="#6c7480" stroke-width="0.8" stroke-dasharray="2 2"/>
<path d="M454 84H684" stroke="#6c7480" stroke-width="0.8" stroke-dasharray="2 2"/>
<path d="M454 104.2H684" stroke="#6c7480" stroke-width="0.8" stroke-dasharray="2 2"/>
<path d="M454 124.4H684" stroke="#6c7480" stroke-width="0.8" stroke-dasharray="2 2"/>
<path d="M454 144.4H684" stroke="#6c7480" stroke-width="0.8" stroke-dasharray="2 2"/>
<path d="M454.0 99.0V104.6" stroke="#18d018" stroke-width="0.8"/>
<rect x="453.35" y="101.0" width="1.3" height="1.5999999999999943" fill="#e8ffe8" stroke="#18d018" stroke-width="0.7"/>
<path d="M455.9 101.4V105.8" stroke="#18d018" stroke-width="0.8"/>
<rect x="455.25" y="102.4" width="1.3" height="1.2999999999999972" fill="#000" stroke="#18d018" stroke-width="0.7"/>
<path d="M457.8 99.6V105.2" stroke="#18d018" stroke-width="0.8"/>
<rect x="457.15000000000003" y="101.5" width="1.3" height="2.299999999999997" fill="#000" stroke="#18d018" stroke-width="0.7"/>
<path d="M459.7 99.6V105.3" stroke="#18d018" stroke-width="0.8"/>
<rect x="459.05" y="101.2" width="1.3" height="1.8999999999999915" fill="#000" stroke="#18d018" stroke-width="0.7"/>
<path d="M461.6 98.1V103.9" stroke="#18d018" stroke-width="0.8"/>
<rect x="460.95000000000005" y="100.1" width="1.3" height="2.5" fill="#e8ffe8" stroke="#18d018" stroke-width="0.7"/>
<path d="M463.5 97.4V104.9" stroke="#18d018" stroke-width="0.8"/>
<rect x="462.85" y="99.9" width="1.3" height="2.5" fill="#e8ffe8" stroke="#18d018" stroke-width="0.7"/>
<path d="M465.4 101.3V108.7" stroke="#18d018" stroke-width="0.8"/>
<rect x="464.75" y="104.0" width="1.3" height="2.5" fill="#000" stroke="#18d018" stroke-width="0.7"/>
<path d="M467.3 100.8V107.8" stroke="#18d018" stroke-width="0.8"/>
<rect x="466.65000000000003" y="103.7" width="1.3" height="2.3999999999999915" fill="#000" stroke="#18d018" stroke-width="0.7"/>
<path d="M469.2 102.6V108.8" stroke="#18d018" stroke-width="0.8"/>
<rect x="468.55" y="104.0" width="1.3" height="3.0" fill="#000" stroke="#18d018" stroke-width="0.7"/>
<path d="M471.1 105.4V113.9" stroke="#18d018" stroke-width="0.8"/>
<rect x="470.45000000000005" y="109.0" width="1.3" height="3.0999999999999943" fill="#000" stroke="#18d018" stroke-width="0.7"/>
<path d="M473.0 106.8V114.0" stroke="#18d018" stroke-width="0.8"/>
<rect x="472.35" y="108.5" width="1.3" height="4.200000000000003" fill="#e8ffe8" stroke="#18d018" stroke-width="0.7"/>
<path d="M474.9 114.0V117.6" stroke="#18d018" stroke-width="0.8"/>
<rect x="474.25" y="115.1" width="1.3" height="1.4000000000000057" fill="#000" stroke="#18d018" stroke-width="0.7"/>
<path d="M476.8 112.4V118.0" stroke="#18d018" stroke-width="0.8"/>
<rect x="476.15000000000003" y="113.7" width="1.3" height="2.5999999999999943" fill="#000" stroke="#18d018" stroke-width="0.7"/>
<path d="M478.7 114.8V123.0" stroke="#18d018" stroke-width="0.8"/>
<rect x="478.05" y="116.7" width="1.3" height="3.799999999999997" fill="#000" stroke="#18d018" stroke-width="0.7"/>
<path d="M480.6 117.3V122.7" stroke="#18d018" stroke-width="0.8"/>
<rect x="479.95000000000005" y="119.0" width="1.3" height="1.4000000000000057" fill="#000" stroke="#18d018" stroke-width="0.7"/>
<path d="M482.5 114.4V121.2" stroke="#18d018" stroke-width="0.8"/>
<rect x="481.85" y="116.5" width="1.3" height="1.5" fill="#000" stroke="#18d018" stroke-width="0.7"/>
<path d="M484.4 114.4V123.3" stroke="#18d018" stroke-width="0.8"/>
<rect x="483.75" y="117.5" width="1.3" height="2.200000000000003" fill="#000" stroke="#18d018" stroke-width="0.7"/>
<path d="M486.3 117.5V123.5" stroke="#18d018" stroke-width="0.8"/>
<rect x="485.65000000000003" y="120.1" width="1.3" height="1.9000000000000057" fill="#e8ffe8" stroke="#18d018" stroke-width="0.7"/>
<path d="M488.2 117.8V121.8" stroke="#18d018" stroke-width="0.8"/>
<rect x="487.55" y="118.7" width="1.3" height="1.5" fill="#e8ffe8" stroke="#18d018" stroke-width="0.7"/>
<path d="M490.1 119.4V123.5" stroke="#18d018" stroke-width="0.8"/>
<rect x="489.45000000000005" y="120.1" width="1.3" height="2.1000000000000085" fill="#e8ffe8" stroke="#18d018" stroke-width="0.7"/>
<path d="M492.0 117.6V123.8" stroke="#18d018" stroke-width="0.8"/>
<rect x="491.35" y="119.3" width="1.3" height="2.9000000000000057" fill="#e8ffe8" stroke="#18d018" stroke-width="0.7"/>
<path d="M493.9 113.6V119.7" stroke="#18d018" stroke-width="0.8"/>
<rect x="493.25" y="115.6" width="1.3" height="3.200000000000003" fill="#000" stroke="#18d018" stroke-width="0.7"/>
<path d="M495.8 113.9V121.9" stroke="#18d018" stroke-width="0.8"/>
<rect x="495.15000000000003" y="116.1" width="1.3" height="1.9000000000000057" fill="#000" stroke="#18d018" stroke-width="0.7"/>
<path d="M497.7 110.8V118.9" stroke="#18d018" stroke-width="0.8"/>
<rect x="497.05" y="114.0" width="1.3" height="2.0999999999999943" fill="#000" stroke="#18d018" stroke-width="0.7"/>
<path d="M499.6 105.1V113.7" stroke="#18d018" stroke-width="0.8"/>
<rect x="498.95000000000005" y="107.9" width="1.3" height="3.3999999999999915" fill="#000" stroke="#18d018" stroke-width="0.7"/>
<path d="M501.5 103.2V108.0" stroke="#18d018" stroke-width="0.8"/>
<rect x="500.85" y="104.3" width="1.3" height="2.4000000000000057" fill="#e8ffe8" stroke="#18d018" stroke-width="0.7"/>
<path d="M503.4 85.5V99.7" stroke="#18d018" stroke-width="0.8"/>
<rect x="502.75" y="88.9" width="1.3" height="6.099999999999994" fill="#000" stroke="#18d018" stroke-width="0.7"/>
<path d="M505.3 94.3V105.6" stroke="#18d018" stroke-width="0.8"/>
<rect x="504.65000000000003" y="97.5" width="1.3" height="3.799999999999997" fill="#000" stroke="#18d018" stroke-width="0.7"/>
<path d="M507.2 103.3V122.6" stroke="#18d018" stroke-width="0.8"/>
<rect x="506.55" y="106.8" width="1.3" height="11.5" fill="#000" stroke="#18d018" stroke-width="0.7"/>
<path d="M509.1 93.6V112.5" stroke="#18d018" stroke-width="0.8"/>
<rect x="508.45000000000005" y="99.3" width="1.3" height="7.5" fill="#000" stroke="#18d018" stroke-width="0.7"/>
<path d="M511.0 102.5V113.3" stroke="#18d018" stroke-width="0.8"/>
<rect x="510.35" y="106.5" width="1.3" height="5.400000000000006" fill="#e8ffe8" stroke="#18d018" stroke-width="0.7"/>
<path d="M512.9 99.1V121.9" stroke="#18d018" stroke-width="0.8"/>
<rect x="512.25" y="102.4" width="1.3" height="10.699999999999989" fill="#000" stroke="#18d018" stroke-width="0.7"/>
<path d="M514.8 107.6V126.3" stroke="#18d018" stroke-width="0.8"/>
<rect x="514.15" y="114.7" width="1.3" height="4.8999999999999915" fill="#000" stroke="#18d018" stroke-width="0.7"/>
<path d="M516.7 122.0V135.6" stroke="#18d018" stroke-width="0.8"/>
<rect x="516.0500000000001" y="124.2" width="1.3" height="8.999999999999986" fill="#e8ffe8" stroke="#18d018" stroke-width="0.7"/>
<path d="M518.6 110.7V129.6" stroke="#18d018" stroke-width="0.8"/>
<rect x="517.95" y="115.7" width="1.3" height="7.700000000000003" fill="#e8ffe8" stroke="#18d018" stroke-width="0.7"/>
<path d="M520.5 119.1V140.2" stroke="#18d018" stroke-width="0.8"/>
<rect x="519.85" y="123.6" width="1.3" height="11.0" fill="#000" stroke="#18d018" stroke-width="0.7"/>
<path d="M522.4 138.4V143.9" stroke="#18d018" stroke-width="0.8"/>
<rect x="521.75" y="139.3" width="1.3" height="1.5999999999999943" fill="#e8ffe8" stroke="#18d018" stroke-width="0.7"/>
<path d="M524.3 131.9V154.7" stroke="#18d018" stroke-width="0.8"/>
<rect x="523.65" y="137.4" width="1.3" height="10.5" fill="#000" stroke="#18d018" stroke-width="0.7"/>
<path d="M526.2 132.2V147.9" stroke="#18d018" stroke-width="0.8"/>
<rect x="525.5500000000001" y="137.7" width="1.3" height="5.400000000000006" fill="#000" stroke="#18d018" stroke-width="0.7"/>
<path d="M528.1 131.6V152.5" stroke="#18d018" stroke-width="0.8"/>
<rect x="527.45" y="137.2" width="1.3" height="10.400000000000006" fill="#000" stroke="#18d018" stroke-width="0.7"/>
<path d="M530.0 119.6V136.7" stroke="#18d018" stroke-width="0.8"/>
<rect x="529.35" y="124.4" width="1.3" height="8.599999999999994" fill="#000" stroke="#18d018" stroke-width="0.7"/>
<path d="M531.9 115.6V129.1" stroke="#18d018" stroke-width="0.8"/>
<rect x="531.25" y="117.4" width="1.3" height="9.599999999999994" fill="#000" stroke="#18d018" stroke-width="0.7"/>
<path d="M533.8 114.9V125.6" stroke="#18d018" stroke-width="0.8"/>
<rect x="533.15" y="119.0" width="1.3" height="3.200000000000003" fill="#e8ffe8" stroke="#18d018" stroke-width="0.7"/>
<path d="M535.7 118.9V132.7" stroke="#18d018" stroke-width="0.8"/>
<rect x="535.0500000000001" y="124.7" width="1.3" height="5.999999999999986" fill="#000" stroke="#18d018" stroke-width="0.7"/>
<path d="M537.6 114.0V124.1" stroke="#18d018" stroke-width="0.8"/>
<rect x="536.95" y="115.3" width="1.3" height="6.5" fill="#000" stroke="#18d018" stroke-width="0.7"/>
<path d="M539.5 109.8V116.5" stroke="#18d018" stroke-width="0.8"/>
<rect x="538.85" y="111.3" width="1.3" height="2.9000000000000057" fill="#000" stroke="#18d018" stroke-width="0.7"/>
<path d="M541.4 104.0V112.7" stroke="#18d018" stroke-width="0.8"/>
<rect x="540.75" y="105.3" width="1.3" height="3.6000000000000085" fill="#000" stroke="#18d018" stroke-width="0.7"/>
<path d="M543.3 108.5V114.8" stroke="#18d018" stroke-width="0.8"/>
<rect x="542.65" y="111.5" width="1.3" height="1.2999999999999972" fill="#e8ffe8" stroke="#18d018" stroke-width="0.7"/>
<path d="M545.2 109.6V121.1" stroke="#18d018" stroke-width="0.8"/>
<rect x="544.5500000000001" y="111.2" width="1.3" height="5.099999999999994" fill="#000" stroke="#18d018" stroke-width="0.7"/>
<path d="M547.1 120.0V124.8" stroke="#18d018" stroke-width="0.8"/>
<rect x="546.45" y="122.2" width="1.3" height="1.7999999999999972" fill="#000" stroke="#18d018" stroke-width="0.7"/>
<path d="M549.0 118.7V128.9" stroke="#18d018" stroke-width="0.8"/>
<rect x="548.35" y="121.5" width="1.3" height="4.200000000000003" fill="#000" stroke="#18d018" stroke-width="0.7"/>
<path d="M550.9 118.3V125.9" stroke="#18d018" stroke-width="0.8"/>
<rect x="550.25" y="119.3" width="1.3" height="3.6000000000000085" fill="#e8ffe8" stroke="#18d018" stroke-width="0.7"/>
<path d="M552.8 118.3V123.6" stroke="#18d018" stroke-width="0.8"/>
<rect x="552.15" y="120.4" width="1.3" height="1.2999999999999972" fill="#000" stroke="#18d018" stroke-width="0.7"/>
<path d="M554.7 116.0V122.1" stroke="#18d018" stroke-width="0.8"/>
<rect x="554.0500000000001" y="117.7" width="1.3" height="2.299999999999997" fill="#e8ffe8" stroke="#18d018" stroke-width="0.7"/>
<path d="M556.6 112.3V120.7" stroke="#18d018" stroke-width="0.8"/>
<rect x="555.95" y="116.3" width="1.3" height="2.700000000000003" fill="#000" stroke="#18d018" stroke-width="0.7"/>
<path d="M558.5 108.2V116.9" stroke="#18d018" stroke-width="0.8"/>
<rect x="557.85" y="110.3" width="1.3" height="3.4000000000000057" fill="#000" stroke="#18d018" stroke-width="0.7"/>
<path d="M560.4 106.1V116.5" stroke="#18d018" stroke-width="0.8"/>
<rect x="559.75" y="108.6" width="1.3" height="5.400000000000006" fill="#e8ffe8" stroke="#18d018" stroke-width="0.7"/>
<path d="M562.3 107.3V111.5" stroke="#18d018" stroke-width="0.8"/>
<rect x="561.65" y="108.3" width="1.3" height="1.9000000000000057" fill="#000" stroke="#18d018" stroke-width="0.7"/>
<path d="M564.2 109.7V120.7" stroke="#18d018" stroke-width="0.8"/>
<rect x="563.5500000000001" y="112.9" width="1.3" height="4.0" fill="#e8ffe8" stroke="#18d018" stroke-width="0.7"/>
<path d="M566.1 107.5V114.9" stroke="#18d018" stroke-width="0.8"/>
<rect x="565.45" y="109.5" width="1.3" height="4.200000000000003" fill="#000" stroke="#18d018" stroke-width="0.7"/>
<path d="M568.0 106.2V114.9" stroke="#18d018" stroke-width="0.8"/>
<rect x="567.35" y="109.5" width="1.3" height="2.5" fill="#e8ffe8" stroke="#18d018" stroke-width="0.7"/>
<path d="M569.9 109.5V113.7" stroke="#18d018" stroke-width="0.8"/>
<rect x="569.25" y="111.4" width="1.3" height="1.1999999999999886" fill="#e8ffe8" stroke="#18d018" stroke-width="0.7"/>
<path d="M571.8 106.0V114.6" stroke="#18d018" stroke-width="0.8"/>
<rect x="571.15" y="108.9" width="1.3" height="3.0" fill="#000" stroke="#18d018" stroke-width="0.7"/>
<path d="M573.7 111.4V120.0" stroke="#18d018" stroke-width="0.8"/>
<rect x="573.0500000000001" y="113.5" width="1.3" height="4.0" fill="#000" stroke="#18d018" stroke-width="0.7"/>
<path d="M575.6 103.5V115.6" stroke="#18d018" stroke-width="0.8"/>
<rect x="574.95" y="104.8" width="1.3" height="6.799999999999997" fill="#e8ffe8" stroke="#18d018" stroke-width="0.7"/>
<path d="M577.5 106.6V117.2" stroke="#18d018" stroke-width="0.8"/>
<rect x="576.85" y="109.6" width="1.3" height="5.1000000000000085" fill="#000" stroke="#18d018" stroke-width="0.7"/>
<path d="M579.4 108.8V118.4" stroke="#18d018" stroke-width="0.8"/>
<rect x="578.75" y="111.6" width="1.3" height="3.0" fill="#e8ffe8" stroke="#18d018" stroke-width="0.7"/>
<path d="M581.3 108.8V118.9" stroke="#18d018" stroke-width="0.8"/>
<rect x="580.65" y="111.9" width="1.3" height="4.3999999999999915" fill="#e8ffe8" stroke="#18d018" stroke-width="0.7"/>
<path d="M583.2 107.7V117.7" stroke="#18d018" stroke-width="0.8"/>
<rect x="582.5500000000001" y="111.2" width="1.3" height="4.599999999999994" fill="#000" stroke="#18d018" stroke-width="0.7"/>
<path d="M585.1 107.4V113.3" stroke="#18d018" stroke-width="0.8"/>
<rect x="584.45" y="108.9" width="1.3" height="1.8999999999999915" fill="#000" stroke="#18d018" stroke-width="0.7"/>
<path d="M587.0 106.3V115.1" stroke="#18d018" stroke-width="0.8"/>
<rect x="586.35" y="109.5" width="1.3" height="3.0999999999999943" fill="#000" stroke="#18d018" stroke-width="0.7"/>
<path d="M588.9 105.6V111.6" stroke="#18d018" stroke-width="0.8"/>
<rect x="588.25" y="107.5" width="1.3" height="2.0999999999999943" fill="#e8ffe8" stroke="#18d018" stroke-width="0.7"/>
<path d="M590.8 103.6V110.5" stroke="#18d018" stroke-width="0.8"/>
<rect x="590.15" y="106.1" width="1.3" height="2.9000000000000057" fill="#000" stroke="#18d018" stroke-width="0.7"/>
<path d="M592.7 105.2V113.8" stroke="#18d018" stroke-width="0.8"/>
<rect x="592.0500000000001" y="107.6" width="1.3" height="3.1000000000000085" fill="#000" stroke="#18d018" stroke-width="0.7"/>
<path d="M594.6 100.8V108.2" stroke="#18d018" stroke-width="0.8"/>
<rect x="593.95" y="102.7" width="1.3" height="4.299999999999997" fill="#e8ffe8" stroke="#18d018" stroke-width="0.7"/>
<path d="M596.5 105.5V113.3" stroke="#18d018" stroke-width="0.8"/>
<rect x="595.85" y="107.7" width="1.3" height="2.0999999999999943" fill="#e8ffe8" stroke="#18d018" stroke-width="0.7"/>
<path d="M598.4 104.2V112.8" stroke="#18d018" stroke-width="0.8"/>
<rect x="597.75" y="105.5" width="1.3" height="4.200000000000003" fill="#000" stroke="#18d018" stroke-width="0.7"/>
<path d="M600.3 100.8V104.9" stroke="#18d018" stroke-width="0.8"/>
<rect x="599.65" y="102.2" width="1.3" height="1.5999999999999943" fill="#e8ffe8" stroke="#18d018" stroke-width="0.7"/>
<path d="M602.2 99.0V108.7" stroke="#18d018" stroke-width="0.8"/>
<rect x="601.5500000000001" y="103.4" width="1.3" height="3.6999999999999886" fill="#000" stroke="#18d018" stroke-width="0.7"/>
<path d="M604.1 101.7V111.9" stroke="#18d018" stroke-width="0.8"/>
<rect x="603.45" y="104.9" width="1.3" height="3.5999999999999943" fill="#000" stroke="#18d018" stroke-width="0.7"/>
<path d="M606.0 101.7V109.2" stroke="#18d018" stroke-width="0.8"/>
<rect x="605.35" y="103.4" width="1.3" height="2.0" fill="#e8ffe8" stroke="#18d018" stroke-width="0.7"/>
<path d="M607.9 104.8V110.4" stroke="#18d018" stroke-width="0.8"/>
<rect x="607.25" y="106.5" width="1.3" height="2.0999999999999943" fill="#000" stroke="#18d018" stroke-width="0.7"/>
<path d="M609.8 101.2V111.0" stroke="#18d018" stroke-width="0.8"/>
<rect x="609.15" y="104.9" width="1.3" height="4.599999999999994" fill="#000" stroke="#18d018" stroke-width="0.7"/>
<path d="M611.7 99.5V107.5" stroke="#18d018" stroke-width="0.8"/>
<rect x="611.0500000000001" y="101.7" width="1.3" height="4.0" fill="#e8ffe8" stroke="#18d018" stroke-width="0.7"/>
<path d="M613.6 106.7V113.0" stroke="#18d018" stroke-width="0.8"/>
<rect x="612.95" y="108.3" width="1.3" height="1.7999999999999972" fill="#000" stroke="#18d018" stroke-width="0.7"/>
<path d="M615.5 101.7V110.3" stroke="#18d018" stroke-width="0.8"/>
<rect x="614.85" y="104.6" width="1.3" height="3.700000000000003" fill="#e8ffe8" stroke="#18d018" stroke-width="0.7"/>
<path d="M617.4 102.6V114.8" stroke="#18d018" stroke-width="0.8"/>
<rect x="616.75" y="105.6" width="1.3" height="4.200000000000003" fill="#000" stroke="#18d018" stroke-width="0.7"/>
<path d="M619.3 112.0V116.6" stroke="#18d018" stroke-width="0.8"/>
<rect x="618.65" y="113.5" width="1.3" height="1.5" fill="#e8ffe8" stroke="#18d018" stroke-width="0.7"/>
<path d="M621.2 115.0V123.3" stroke="#18d018" stroke-width="0.8"/>
<rect x="620.5500000000001" y="117.0" width="1.3" height="3.5" fill="#e8ffe8" stroke="#18d018" stroke-width="0.7"/>
<path d="M623.1 117.3V122.1" stroke="#18d018" stroke-width="0.8"/>
<rect x="622.45" y="118.5" width="1.3" height="2.0" fill="#000" stroke="#18d018" stroke-width="0.7"/>
<path d="M625.0 116.0V121.9" stroke="#18d018" stroke-width="0.8"/>
<rect x="624.35" y="118.0" width="1.3" height="1.7000000000000028" fill="#000" stroke="#18d018" stroke-width="0.7"/>
<path d="M626.9 107.7V116.6" stroke="#18d018" stroke-width="0.8"/>
<rect x="626.25" y="111.7" width="1.3" height="1.8999999999999915" fill="#000" stroke="#18d018" stroke-width="0.7"/>
<path d="M628.8 104.0V111.2" stroke="#18d018" stroke-width="0.8"/>
<rect x="628.15" y="106.8" width="1.3" height="1.9000000000000057" fill="#000" stroke="#18d018" stroke-width="0.7"/>
<path d="M630.7 102.2V109.6" stroke="#18d018" stroke-width="0.8"/>
<rect x="630.0500000000001" y="104.9" width="1.3" height="1.5999999999999943" fill="#000" stroke="#18d018" stroke-width="0.7"/>
<path d="M632.6 103.9V110.4" stroke="#18d018" stroke-width="0.8"/>
<rect x="631.95" y="105.1" width="1.3" height="2.700000000000003" fill="#e8ffe8" stroke="#18d018" stroke-width="0.7"/>
<path d="M634.5 103.8V109.3" stroke="#18d018" stroke-width="0.8"/>
<rect x="633.85" y="105.6" width="1.3" height="1.6000000000000085" fill="#000" stroke="#18d018" stroke-width="0.7"/>
<path d="M636.4 100.8V105.5" stroke="#18d018" stroke-width="0.8"/>
<rect x="635.75" y="102.5" width="1.3" height="1.7999999999999972" fill="#000" stroke="#18d018" stroke-width="0.7"/>
<path d="M638.3 99.4V106.6" stroke="#18d018" stroke-width="0.8"/>
<rect x="637.65" y="101.3" width="1.3" height="2.6000000000000085" fill="#000" stroke="#18d018" stroke-width="0.7"/>
<path d="M640.2 100.0V104.8" stroke="#18d018" stroke-width="0.8"/>
<rect x="639.5500000000001" y="101.2" width="1.3" height="2.799999999999997" fill="#000" stroke="#18d018" stroke-width="0.7"/>
<path d="M642.1 99.7V107.5" stroke="#18d018" stroke-width="0.8"/>
<rect x="641.45" y="103.4" width="1.3" height="2.6999999999999886" fill="#e8ffe8" stroke="#18d018" stroke-width="0.7"/>
<path d="M644.0 97.6V106.8" stroke="#18d018" stroke-width="0.8"/>
<rect x="643.35" y="100.6" width="1.3" height="2.8000000000000114" fill="#000" stroke="#18d018" stroke-width="0.7"/>
<path d="M645.9 95.5V105.9" stroke="#18d018" stroke-width="0.8"/>
<rect x="645.25" y="98.6" width="1.3" height="5.400000000000006" fill="#000" stroke="#18d018" stroke-width="0.7"/>
<path d="M647.8 94.6V106.3" stroke="#18d018" stroke-width="0.8"/>
<rect x="647.15" y="97.4" width="1.3" height="4.799999999999997" fill="#000" stroke="#18d018" stroke-width="0.7"/>
<path d="M649.7 99.4V106.4" stroke="#18d018" stroke-width="0.8"/>
<rect x="649.0500000000001" y="102.9" width="1.3" height="1.8999999999999915" fill="#e8ffe8" stroke="#18d018" stroke-width="0.7"/>
<path d="M651.6 87.7V98.1" stroke="#18d018" stroke-width="0.8"/>
<rect x="650.95" y="90.3" width="1.3" height="4.5" fill="#000" stroke="#18d018" stroke-width="0.7"/>
<path d="M653.5 86.6V92.7" stroke="#18d018" stroke-width="0.8"/>
<rect x="652.85" y="87.2" width="1.3" height="3.0999999999999943" fill="#e8ffe8" stroke="#18d018" stroke-width="0.7"/>
<path d="M655.4 81.9V88.3" stroke="#18d018" stroke-width="0.8"/>
<rect x="654.75" y="84.1" width="1.3" height="1.6000000000000085" fill="#000" stroke="#18d018" stroke-width="0.7"/>
<path d="M657.3 76.9V85.4" stroke="#18d018" stroke-width="0.8"/>
<rect x="656.65" y="79.2" width="1.3" height="2.5999999999999943" fill="#000" stroke="#18d018" stroke-width="0.7"/>
<path d="M659.2 76.1V81.7" stroke="#18d018" stroke-width="0.8"/>
<rect x="658.5500000000001" y="77.6" width="1.3" height="2.700000000000003" fill="#000" stroke="#18d018" stroke-width="0.7"/>
<path d="M661.1 76.0V80.4" stroke="#18d018" stroke-width="0.8"/>
<rect x="660.45" y="76.7" width="1.3" height="3.0" fill="#e8ffe8" stroke="#18d018" stroke-width="0.7"/>
<path d="M663.0 78.8V84.2" stroke="#18d018" stroke-width="0.8"/>
<rect x="662.35" y="80.3" width="1.3" height="2.700000000000003" fill="#000" stroke="#18d018" stroke-width="0.7"/>
<path d="M664.9 77.3V82.0" stroke="#18d018" stroke-width="0.8"/>
<rect x="664.25" y="78.7" width="1.3" height="2.299999999999997" fill="#000" stroke="#18d018" stroke-width="0.7"/>
<path d="M666.8 77.8V84.5" stroke="#18d018" stroke-width="0.8"/>
<rect x="666.15" y="79.0" width="1.3" height="2.799999999999997" fill="#000" stroke="#18d018" stroke-width="0.7"/>
<path d="M668.7 77.5V83.9" stroke="#18d018" stroke-width="0.8"/>
<rect x="668.0500000000001" y="79.9" width="1.3" height="1.8999999999999915" fill="#e8ffe8" stroke="#18d018" stroke-width="0.7"/>
<path d="M670.6 75.8V83.1" stroke="#18d018" stroke-width="0.8"/>
<rect x="669.95" y="78.1" width="1.3" height="3.4000000000000057" fill="#e8ffe8" stroke="#18d018" stroke-width="0.7"/>
<path d="M672.5 74.2V81.1" stroke="#18d018" stroke-width="0.8"/>
<rect x="671.85" y="77.3" width="1.3" height="1.7999999999999972" fill="#e8ffe8" stroke="#18d018" stroke-width="0.7"/>
<path d="M674.4 74.8V81.9" stroke="#18d018" stroke-width="0.8"/>
<rect x="673.75" y="76.5" width="1.3" height="2.5" fill="#e8ffe8" stroke="#18d018" stroke-width="0.7"/>
<path d="M676.3 75.4V80.2" stroke="#18d018" stroke-width="0.8"/>
<rect x="675.65" y="77.2" width="1.3" height="1.8999999999999915" fill="#000" stroke="#18d018" stroke-width="0.7"/>
<path d="M678.2 76.3V81.9" stroke="#18d018" stroke-width="0.8"/>
<rect x="677.5500000000001" y="78.6" width="1.3" height="2.5" fill="#000" stroke="#18d018" stroke-width="0.7"/>
<path d="M680.1 76.4V81.4" stroke="#18d018" stroke-width="0.8"/>
<rect x="679.45" y="77.9" width="1.3" height="2.299999999999997" fill="#e8ffe8" stroke="#18d018" stroke-width="0.7"/>
<path d="M682.0 75.0V83.3" stroke="#18d018" stroke-width="0.8"/>
<rect x="681.35" y="76.8" width="1.3" height="2.700000000000003" fill="#000" stroke="#18d018" stroke-width="0.7"/>
<path d="M504.8 80.5V137" stroke="#18d018" stroke-width="0.8"/>
<rect x="504.15000000000003" y="84" width="1.3" height="12" fill="#e8ffe8" stroke="#18d018" stroke-width="0.7"/>
<path d="M507.5 84V106" stroke="#18d018" stroke-width="0.8"/>
<rect x="506.85" y="88" width="1.3" height="12" fill="#e8ffe8" stroke="#18d018" stroke-width="0.7"/>
<path d="M523.4 121V163" stroke="#18d018" stroke-width="0.8"/>
<rect x="522.75" y="140" width="1.3" height="16" fill="#e8ffe8" stroke="#18d018" stroke-width="0.7"/>
<path d="M521 112V150" stroke="#18d018" stroke-width="0.8"/>
<rect x="520.35" y="125" width="1.3" height="15" fill="#e8ffe8" stroke="#18d018" stroke-width="0.7"/>
<path d="M526 130V160" stroke="#18d018" stroke-width="0.8"/>
<rect x="525.35" y="136" width="1.3" height="14" fill="#e8ffe8" stroke="#18d018" stroke-width="0.7"/>
<path d="M513.5 100V135" stroke="#18d018" stroke-width="0.8"/>
<rect x="512.85" y="108" width="1.3" height="17" fill="#e8ffe8" stroke="#18d018" stroke-width="0.7"/>
<path d="M453.5 80.7H684.5" stroke="#b8bcc4" stroke-width="0.8"/>
<rect x="453.5" y="69.5" width="231" height="95.5" fill="none" stroke="#c0c0c0" stroke-width="0.9"/>
<path d="M455 72.9h4l-2 2.4z" fill="#e8e8e8"/>
<text x="461.5" y="76.2" font-size="5.6" fill="#f0f0ec" xml:space="preserve">NZDCAD,Daily  <tspan dx="1">0.87416 0.87807 0.87252 0.87394</tspan></text>
<path d="M684.5 84h2" stroke="#c0c0c0" stroke-width="0.8"/>
<text x="688" y="86" font-size="5.4" fill="#e0e0dc" text-anchor="start">0.85070</text>
<path d="M684.5 104.2h2" stroke="#c0c0c0" stroke-width="0.8"/>
<text x="688" y="106.2" font-size="5.4" fill="#e0e0dc" text-anchor="start">0.85320</text>
<path d="M684.5 124.4h2" stroke="#c0c0c0" stroke-width="0.8"/>
<text x="688" y="126.4" font-size="5.4" fill="#e0e0dc" text-anchor="start">0.83570</text>
<path d="M684.5 144.4h2" stroke="#c0c0c0" stroke-width="0.8"/>
<text x="688" y="146.4" font-size="5.4" fill="#e0e0dc" text-anchor="start">0.81820</text>
<path d="M684.5 163.5h2" stroke="#c0c0c0" stroke-width="0.8"/>
<text x="688" y="165.5" font-size="5.4" fill="#e0e0dc" text-anchor="start">0.80120</text>
<rect x="686" y="78" width="23.7" height="5.8" fill="#fff"/>
<text x="687.5" y="82.6" font-size="5.5" fill="#000" text-anchor="start">0.87394</text>
<path d="M453.3 165v2" stroke="#c0c0c0" stroke-width="0.8"/>
<text x="453.3" y="173.6" font-size="5.4" fill="#e0e0dc" text-anchor="start">7 Feb 2020</text>
<path d="M491.7 165v2" stroke="#c0c0c0" stroke-width="0.8"/>
<text x="491.7" y="173.6" font-size="5.4" fill="#e0e0dc" text-anchor="start">2 Mar 2020</text>
<path d="M530 165v2" stroke="#c0c0c0" stroke-width="0.8"/>
<text x="530" y="173.6" font-size="5.4" fill="#e0e0dc" text-anchor="start">24 Mar 2020</text>
<path d="M568.3 165v2" stroke="#c0c0c0" stroke-width="0.8"/>
<text x="568.3" y="173.6" font-size="5.4" fill="#e0e0dc" text-anchor="start">15 Apr 2020</text>
<path d="M606.7 165v2" stroke="#c0c0c0" stroke-width="0.8"/>
<text x="606.7" y="173.6" font-size="5.4" fill="#e0e0dc" text-anchor="start">7 May 2020</text>
<path d="M644.3 165v2" stroke="#c0c0c0" stroke-width="0.8"/>
<text x="644.3" y="173.6" font-size="5.4" fill="#e0e0dc" text-anchor="start">29 May 2020</text>
</svg>
<svg style="left:180px;top:203px" width="260" height="111" viewBox="180 203 260 111" font-family='"Liberation Sans", sans-serif'>
<rect x="180" y="203" width="260" height="111" fill="#000"/>
<path d="M201.4 206V301" stroke="#6c7480" stroke-width="0.8" stroke-dasharray="2 2"/>
<path d="M220.5 206V301" stroke="#6c7480" stroke-width="0.8" stroke-dasharray="2 2"/>
<path d="M239.6 206V301" stroke="#6c7480" stroke-width="0.8" stroke-dasharray="2 2"/>
<path d="M258.7 206V301" stroke="#6c7480" stroke-width="0.8" stroke-dasharray="2 2"/>
<path d="M277.8 206V301" stroke="#6c7480" stroke-width="0.8" stroke-dasharray="2 2"/>
<path d="M296.9 206V301" stroke="#6c7480" stroke-width="0.8" stroke-dasharray="2 2"/>
<path d="M316.0 206V301" stroke="#6c7480" stroke-width="0.8" stroke-dasharray="2 2"/>
<path d="M335.1 206V301" stroke="#6c7480" stroke-width="0.8" stroke-dasharray="2 2"/>
<path d="M354.2 206V301" stroke="#6c7480" stroke-width="0.8" stroke-dasharray="2 2"/>
<path d="M373.3 206V301" stroke="#6c7480" stroke-width="0.8" stroke-dasharray="2 2"/>
<path d="M392.4 206V301" stroke="#6c7480" stroke-width="0.8" stroke-dasharray="2 2"/>
<path d="M182 220.6H411" stroke="#6c7480" stroke-width="0.8" stroke-dasharray="2 2"/>
<path d="M182 240.5H411" stroke="#6c7480" stroke-width="0.8" stroke-dasharray="2 2"/>
<path d="M182 260H411" stroke="#6c7480" stroke-width="0.8" stroke-dasharray="2 2"/>
<path d="M182 279.9H411" stroke="#6c7480" stroke-width="0.8" stroke-dasharray="2 2"/>
<path d="M182 299.4H411" stroke="#6c7480" stroke-width="0.8" stroke-dasharray="2 2"/>
<path d="M185.8 269V290" stroke="#00d000" stroke-width="0.8"/>
<rect x="181.6" y="273.9" width="8.3" height="13.1" fill="#000" stroke="#00d000" stroke-width="0.8"/>
<path d="M201.3 263.7V276.9" stroke="#00d000" stroke-width="0.8"/>
<rect x="194" y="268.2" width="14.6" height="6.0" fill="#000" stroke="#00d000" stroke-width="0.8"/>
<path d="M220.1 254.4V278.7" stroke="#00d000" stroke-width="0.8"/>
<rect x="212.7" y="267.5" width="14.7" height="8.5" fill="#fff" stroke="#00d000" stroke-width="0.8"/>
<path d="M239.6 276.9V299.4" stroke="#00d000" stroke-width="0.8"/>
<rect x="232.2" y="276.9" width="14.7" height="6.7" fill="#fff" stroke="#00d000" stroke-width="0.8"/>
<path d="M258.5 273.9V298.2" stroke="#00d000" stroke-width="0.8"/>
<rect x="251" y="284.2" width="15.0" height="0.6" fill="#000" stroke="#00d000" stroke-width="0.8"/>
<path d="M277.8 279.5V291.9" stroke="#00d000" stroke-width="0.8"/>
<rect x="270.5" y="284" width="14.6" height="2.2" fill="#fff" stroke="#00d000" stroke-width="0.8"/>
<path d="M297.1 268.6V288.9" stroke="#00d000" stroke-width="0.8"/>
<rect x="289.6" y="269.4" width="15.0" height="12.0" fill="#fff" stroke="#00d000" stroke-width="0.8"/>
<path d="M316.2 272.4V284.4" stroke="#00d000" stroke-width="0.8"/>
<rect x="309.1" y="274.2" width="14.3" height="7.5" fill="#000" stroke="#00d000" stroke-width="0.8"/>
<path d="M335.4 254.4V280.6" stroke="#00d000" stroke-width="0.8"/>
<rect x="328.2" y="256.2" width="14.3" height="18.0" fill="#000" stroke="#00d000" stroke-width="0.8"/>
<path d="M354.5 227V273" stroke="#00d000" stroke-width="0.8"/>
<rect x="347.4" y="229.2" width="14.2" height="27.0" fill="#000" stroke="#00d000" stroke-width="0.8"/>
<path d="M373.6 208.2V237.5" stroke="#00d000" stroke-width="0.8"/>
<rect x="366.5" y="224.4" width="14.2" height="4.8" fill="#000" stroke="#00d000" stroke-width="0.8"/>
<path d="M181.5 224.4H411.5" stroke="#b8bcc4" stroke-width="0.8"/>
<rect x="181.5" y="205.5" width="230" height="95.7" fill="none" stroke="#c0c0c0" stroke-width="0.9"/>
<path d="M184 208.89999999999998h4l-2 2.4z" fill="#e8e8e8"/>
<text x="190.5" y="212.2" font-size="5.6" fill="#f0f0ec" xml:space="preserve">EURGBP,H4  <tspan dx="1">0.90196 0.90417 0.90111 0.90253</tspan></text>
<path d="M411.5 220.6h2" stroke="#c0c0c0" stroke-width="0.8"/>
<text x="415" y="222.6" font-size="5.4" fill="#e0e0dc" text-anchor="start">0.90295</text>
<path d="M411.5 240.5h2" stroke="#c0c0c0" stroke-width="0.8"/>
<text x="415" y="242.5" font-size="5.4" fill="#e0e0dc" text-anchor="start">0.90065</text>
<path d="M411.5 260h2" stroke="#c0c0c0" stroke-width="0.8"/>
<text x="415" y="262" font-size="5.4" fill="#e0e0dc" text-anchor="start">0.89830</text>
<path d="M411.5 279.9h2" stroke="#c0c0c0" stroke-width="0.8"/>
<text x="415" y="281.9" font-size="5.4" fill="#e0e0dc" text-anchor="start">0.89600</text>
<path d="M411.5 299.4h2" stroke="#c0c0c0" stroke-width="0.8"/>
<text x="415" y="301.4" font-size="5.4" fill="#e0e0dc" text-anchor="start">0.89365</text>
<rect x="413" y="221.3" width="23.6" height="6" fill="#fff"/>
<text x="414.5" y="226.10000000000002" font-size="5.5" fill="#000" text-anchor="start">0.90253</text>
<path d="M182 301.2v2" stroke="#c0c0c0" stroke-width="0.8"/>
<text x="182" y="308.9" font-size="5.4" fill="#e0e0dc" text-anchor="start">17 Jun 2020</text>
<path d="M220 301.2v2" stroke="#c0c0c0" stroke-width="0.8"/>
<text x="220" y="308.9" font-size="5.4" fill="#e0e0dc" text-anchor="start">17 Jun 08:00</text>
<path d="M258 301.2v2" stroke="#c0c0c0" stroke-width="0.8"/>
<text x="258" y="308.9" font-size="5.4" fill="#e0e0dc" text-anchor="start">17 Jun 16:00</text>
<path d="M297 301.2v2" stroke="#c0c0c0" stroke-width="0.8"/>
<text x="297" y="308.9" font-size="5.4" fill="#e0e0dc" text-anchor="start">18 Jun 00:00</text>
<path d="M335 301.2v2" stroke="#c0c0c0" stroke-width="0.8"/>
<text x="335" y="308.9" font-size="5.4" fill="#e0e0dc" text-anchor="start">18 Jun 08:00</text>
<path d="M373 301.2v2" stroke="#c0c0c0" stroke-width="0.8"/>
<text x="373" y="308.9" font-size="5.4" fill="#e0e0dc" text-anchor="start">18 Jun 16:00</text>
</svg>
<svg style="left:451px;top:204px" width="261" height="109" viewBox="451 204 261 109" font-family='"Liberation Sans", sans-serif'>
<rect x="451" y="204" width="261" height="109" fill="#000"/>
<path d="M473 207V301" stroke="#6c7480" stroke-width="0.8" stroke-dasharray="2 2"/>
<path d="M492 207V301" stroke="#6c7480" stroke-width="0.8" stroke-dasharray="2 2"/>
<path d="M511.7 207V301" stroke="#6c7480" stroke-width="0.8" stroke-dasharray="2 2"/>
<path d="M530.4 207V301" stroke="#6c7480" stroke-width="0.8" stroke-dasharray="2 2"/>
<path d="M550 207V301" stroke="#6c7480" stroke-width="0.8" stroke-dasharray="2 2"/>
<path d="M569 207V301" stroke="#6c7480" stroke-width="0.8" stroke-dasharray="2 2"/>
<path d="M588 207V301" stroke="#6c7480" stroke-width="0.8" stroke-dasharray="2 2"/>
<path d="M607.5 207V301" stroke="#6c7480" stroke-width="0.8" stroke-dasharray="2 2"/>
<path d="M626.4 207V301" stroke="#6c7480" stroke-width="0.8" stroke-dasharray="2 2"/>
<path d="M645.4 207V301" stroke="#6c7480" stroke-width="0.8" stroke-dasharray="2 2"/>
<path d="M665 207V301" stroke="#6c7480" stroke-width="0.8" stroke-dasharray="2 2"/>
<path d="M454 216.7H684" stroke="#6c7480" stroke-width="0.8" stroke-dasharray="2 2"/>
<path d="M454 236.3H684" stroke="#6c7480" stroke-width="0.8" stroke-dasharray="2 2"/>
<path d="M454 255.6H684" stroke="#6c7480" stroke-width="0.8" stroke-dasharray="2 2"/>
<path d="M454 266.5H684" stroke="#6c7480" stroke-width="0.8" stroke-dasharray="2 2"/>
<path d="M454 280.5H684" stroke="#6c7480" stroke-width="0.8" stroke-dasharray="2 2"/>
<path d="M454 294H684" stroke="#6c7480" stroke-width="0.8" stroke-dasharray="2 2"/>
<path d="M454 210.5 L502 212 L535.5 213.5 L546.7 215.5 L560 218.5 L572.7 222 L589.3 224.5 L606 228 L622.7 233 L639.3 237 L656 240.5 L669.3 241.5" stroke="#2424d8" stroke-width="1.0" fill="none" stroke-linejoin="round"/>
<path d="M454 210 L480 211.6 L513 212.4 L524.4 214 L533 218 L542 221 L551 223 L560 225 L572.7 226 L589.3 229 L606 235.5 L622.7 242 L632.7 245 L642.7 246.3 L654.3 246.5" stroke="#c81818" stroke-width="1.0" fill="none" stroke-linejoin="round"/>
<path d="M454 211 L480 212.5 L502.2 212.7 L511 213.5 L520 217 L531 224 L540 226 L551 228 L560 229 L572.7 231 L586 234 L597.7 240.5 L606 245 L614.3 248 L626 249 L636 249 L646 248" stroke="#c8b010" stroke-width="1.0" fill="none" stroke-linejoin="round"/>
<path d="M454.2 210.5V214" stroke="#00e000" stroke-width="0.8"/>
<rect x="452.7" y="211.5" width="3.0" height="1.5" fill="#000" stroke="#00e000" stroke-width="0.7"/>
<path d="M458.3 210.5V214" stroke="#00e000" stroke-width="0.8"/>
<rect x="456.8" y="211.5" width="3.0" height="1.5" fill="#000" stroke="#00e000" stroke-width="0.7"/>
<path d="M463.3 211V214.5" stroke="#00e000" stroke-width="0.8"/>
<rect x="461.8" y="212" width="3.0" height="1.5" fill="#000" stroke="#00e000" stroke-width="0.7"/>
<path d="M468 211V214.5" stroke="#00e000" stroke-width="0.8"/>
<rect x="466.5" y="212" width="3.0" height="1.5" fill="#000" stroke="#00e000" stroke-width="0.7"/>
<path d="M473 212V219" stroke="#00e000" stroke-width="0.8"/>
<rect x="471.5" y="214" width="3.0" height="2" fill="#fff" stroke="#00e000" stroke-width="0.7"/>
<path d="M478 213V217" stroke="#00e000" stroke-width="0.8"/>
<rect x="476.5" y="214" width="3.0" height="1.5" fill="#000" stroke="#00e000" stroke-width="0.7"/>
<path d="M482.5 213V217" stroke="#00e000" stroke-width="0.8"/>
<rect x="481.0" y="214" width="3.0" height="1.5" fill="#fff" stroke="#00e000" stroke-width="0.7"/>
<path d="M487.5 212.5V219" stroke="#00e000" stroke-width="0.8"/>
<rect x="486.0" y="213.5" width="3.0" height="2.5" fill="#000" stroke="#00e000" stroke-width="0.7"/>
<path d="M492.5 211.5V216" stroke="#00e000" stroke-width="0.8"/>
<rect x="491.0" y="212.5" width="3.0" height="1.5" fill="#000" stroke="#00e000" stroke-width="0.7"/>
<path d="M496.7 210V213.5" stroke="#00e000" stroke-width="0.8"/>
<rect x="495.2" y="211" width="3.0" height="1.5" fill="#000" stroke="#00e000" stroke-width="0.7"/>
<path d="M501.7 211V229" stroke="#00e000" stroke-width="0.8"/>
<rect x="500.2" y="211.8" width="3.0" height="15.5" fill="#fff" stroke="#00e000" stroke-width="0.7"/>
<path d="M506.7 226.5V233" stroke="#00e000" stroke-width="0.8"/>
<rect x="505.2" y="227.5" width="3.0" height="1.5" fill="#000" stroke="#00e000" stroke-width="0.7"/>
<path d="M511.4 224V237" stroke="#00e000" stroke-width="0.8"/>
<rect x="509.9" y="227.9" width="3.0" height="6.099999999999994" fill="#fff" stroke="#00e000" stroke-width="0.7"/>
<path d="M516.1 231V237" stroke="#00e000" stroke-width="0.8"/>
<rect x="514.6" y="232" width="3.0" height="2" fill="#000" stroke="#00e000" stroke-width="0.7"/>
<path d="M520.9 231V235" stroke="#00e000" stroke-width="0.8"/>
<rect x="519.4" y="232" width="3.0" height="2" fill="#000" stroke="#00e000" stroke-width="0.7"/>
<path d="M525.6 227V235" stroke="#00e000" stroke-width="0.8"/>
<rect x="524.1" y="228" width="3.0" height="6" fill="#000" stroke="#00e000" stroke-width="0.7"/>
<path d="M530.6 226V230" stroke="#00e000" stroke-width="0.8"/>
<rect x="529.1" y="227" width="3.0" height="2" fill="#000" stroke="#00e000" stroke-width="0.7"/>
<path d="M535.3 226.5V233" stroke="#00e000" stroke-width="0.8"/>
<rect x="533.8" y="227.5" width="3.0" height="2.0" fill="#000" stroke="#00e000" stroke-width="0.7"/>
<path d="M540 228V233" stroke="#00e000" stroke-width="0.8"/>
<rect x="538.5" y="229" width="3.0" height="3" fill="#fff" stroke="#00e000" stroke-width="0.7"/>
<path d="M544.7 231V234" stroke="#00e000" stroke-width="0.8"/>
<rect x="543.2" y="232" width="3.0" height="1" fill="#000" stroke="#00e000" stroke-width="0.7"/>
<path d="M549.4 232V235" stroke="#00e000" stroke-width="0.8"/>
<rect x="547.9" y="233" width="3.0" height="1" fill="#000" stroke="#00e000" stroke-width="0.7"/>
<path d="M554.2 233V237" stroke="#00e000" stroke-width="0.8"/>
<rect x="552.7" y="234" width="3.0" height="2" fill="#fff" stroke="#00e000" stroke-width="0.7"/>
<path d="M559.3 231V239" stroke="#00e000" stroke-width="0.8"/>
<rect x="557.8" y="234" width="3.0" height="4" fill="#fff" stroke="#00e000" stroke-width="0.7"/>
<path d="M563.5 236V240" stroke="#00e000" stroke-width="0.8"/>
<rect x="562.0" y="237" width="3.0" height="2" fill="#fff" stroke="#00e000" stroke-width="0.7"/>
<path d="M568.5 237.5V242.5" stroke="#00e000" stroke-width="0.8"/>
<rect x="567.0" y="238.5" width="3.0" height="3.0" fill="#fff" stroke="#00e000" stroke-width="0.7"/>
<path d="M573.5 240.5V252" stroke="#00e000" stroke-width="0.8"/>
<rect x="572.0" y="241.5" width="3.0" height="9.5" fill="#fff" stroke="#00e000" stroke-width="0.7"/>
<path d="M578.2 247V254" stroke="#00e000" stroke-width="0.8"/>
<rect x="576.7" y="248" width="3.0" height="3" fill="#000" stroke="#00e000" stroke-width="0.7"/>
<path d="M583 248V253" stroke="#00e000" stroke-width="0.8"/>
<rect x="581.5" y="249" width="3.0" height="3" fill="#fff" stroke="#00e000" stroke-width="0.7"/>
<path d="M587.7 251V253" stroke="#00e000" stroke-width="0.8"/>
<rect x="586.2" y="251.5" width="3.0" height="1.0" fill="#000" stroke="#00e000" stroke-width="0.7"/>
<path d="M592.3 251V254" stroke="#00e000" stroke-width="0.8"/>
<rect x="590.8" y="251.5" width="3.0" height="1.0" fill="#000" stroke="#00e000" stroke-width="0.7"/>
<path d="M597.3 251.5V255" stroke="#00e000" stroke-width="0.8"/>
<rect x="595.8" y="252" width="3.0" height="1" fill="#000" stroke="#00e000" stroke-width="0.7"/>
<path d="M601.8 252V255" stroke="#00e000" stroke-width="0.8"/>
<rect x="600.3" y="252.5" width="3.0" height="1.0" fill="#000" stroke="#00e000" stroke-width="0.7"/>
<path d="M606.8 246V256" stroke="#00e000" stroke-width="0.8"/>
<rect x="605.3" y="247" width="3.0" height="7" fill="#000" stroke="#00e000" stroke-width="0.7"/>
<path d="M611.8 247V252" stroke="#00e000" stroke-width="0.8"/>
<rect x="610.3" y="248" width="3.0" height="3" fill="#fff" stroke="#00e000" stroke-width="0.7"/>
<path d="M616.5 249V253" stroke="#00e000" stroke-width="0.8"/>
<rect x="615.0" y="250" width="3.0" height="1" fill="#000" stroke="#00e000" stroke-width="0.7"/>
<path d="M621.5 245V251" stroke="#00e000" stroke-width="0.8"/>
<rect x="620.0" y="246" width="3.0" height="4" fill="#000" stroke="#00e000" stroke-width="0.7"/>
<path d="M626.3 243V249" stroke="#00e000" stroke-width="0.8"/>
<rect x="624.8" y="244" width="3.0" height="2" fill="#000" stroke="#00e000" stroke-width="0.7"/>
<path d="M631 243V250" stroke="#00e000" stroke-width="0.8"/>
<rect x="629.5" y="244" width="3.0" height="2" fill="#000" stroke="#00e000" stroke-width="0.7"/>
<path d="M453.5 245.5H684.5" stroke="#b8bcc4" stroke-width="0.8"/>
<rect x="453.5" y="205.9" width="231" height="95.1" fill="none" stroke="#c0c0c0" stroke-width="0.9"/>
<rect x="453.5" y="258.2" width="231" height="2" fill="#9a9a9a"/>
<rect x="453.5" y="273" width="231" height="2" fill="#9a9a9a"/>
<rect x="453.5" y="286" width="231" height="2" fill="#9a9a9a"/>
<path d="M492.8 261.5V262" stroke="#a81c1c" stroke-width="1.2"/>
<path d="M497 261.5V262" stroke="#a81c1c" stroke-width="1.2"/>
<path d="M501.8 261.5V262.5" stroke="#a81c1c" stroke-width="1.2"/>
<path d="M506.7 261.5V264" stroke="#a81c1c" stroke-width="1.2"/>
<path d="M510.8 261.5V265" stroke="#a81c1c" stroke-width="1.2"/>
<path d="M516.4 261.5V267" stroke="#a81c1c" stroke-width="1.2"/>
<path d="M521 261.5V268" stroke="#a81c1c" stroke-width="1.2"/>
<path d="M525.4 261.5V268.5" stroke="#a81c1c" stroke-width="1.2"/>
<path d="M530.3 261.5V268" stroke="#1c8a1c" stroke-width="1.2"/>
<path d="M535 261.5V268.5" stroke="#1c8a1c" stroke-width="1.2"/>
<path d="M540 261.5V266" stroke="#1c8a1c" stroke-width="1.2"/>
<path d="M544.9 261.5V267" stroke="#1c8a1c" stroke-width="1.2"/>
<path d="M549 261.5V268" stroke="#1c8a1c" stroke-width="1.2"/>
<path d="M554.6 261.5V268" stroke="#a81c1c" stroke-width="1.2"/>
<path d="M559.4 261.5V267" stroke="#1c8a1c" stroke-width="1.2"/>
<path d="M564.3 261.5V268" stroke="#a81c1c" stroke-width="1.2"/>
<path d="M568.5 261.5V268" stroke="#a81c1c" stroke-width="1.2"/>
<path d="M573.3 261.5V268" stroke="#a81c1c" stroke-width="1.2"/>
<path d="M578.9 261.5V269" stroke="#a81c1c" stroke-width="1.2"/>
<path d="M583 261.5V269" stroke="#a81c1c" stroke-width="1.2"/>
<path d="M588 261.5V270" stroke="#a81c1c" stroke-width="1.2"/>
<path d="M592.8 261.5V270" stroke="#a81c1c" stroke-width="1.2"/>
<path d="M597.5 261.5V270" stroke="#a81c1c" stroke-width="1.2"/>
<path d="M602.2 261.5V268" stroke="#1c8a1c" stroke-width="1.2"/>
<path d="M607 261.5V268" stroke="#1c8a1c" stroke-width="1.2"/>
<path d="M611.8 261.5V268" stroke="#1c8a1c" stroke-width="1.2"/>
<path d="M616.5 261.5V267" stroke="#1c8a1c" stroke-width="1.2"/>
<path d="M621.3 261.5V267" stroke="#1c8a1c" stroke-width="1.2"/>
<path d="M626.1 261.5V266" stroke="#1c8a1c" stroke-width="1.2"/>
<path d="M630.8 261.5V265" stroke="#1c8a1c" stroke-width="1.2"/>
<path d="M506.7 279.3V281" stroke="#a81c1c" stroke-width="1.2"/>
<path d="M510.8 279.3V283" stroke="#a81c1c" stroke-width="1.2"/>
<path d="M516.4 279.3V284" stroke="#a81c1c" stroke-width="1.2"/>
<path d="M521 279.3V285" stroke="#a81c1c" stroke-width="1.2"/>
<path d="M525.4 279.3V284" stroke="#1c8a1c" stroke-width="1.2"/>
<path d="M530.3 279.3V281" stroke="#1c8a1c" stroke-width="1.2"/>
<path d="M569 279.3V280.5" stroke="#1c8a1c" stroke-width="1.2"/>
<path d="M578.9 279.3V282" stroke="#a81c1c" stroke-width="1.2"/>
<path d="M583 279.3V283" stroke="#a81c1c" stroke-width="1.2"/>
<path d="M588 279.3V283" stroke="#a81c1c" stroke-width="1.2"/>
<path d="M602.2 279.3V281" stroke="#1c8a1c" stroke-width="1.2"/>
<path d="M607 279.3V282" stroke="#1c8a1c" stroke-width="1.2"/>
<path d="M611.8 279.3V281" stroke="#1c8a1c" stroke-width="1.2"/>
<path d="M616.5 279.3V281" stroke="#1c8a1c" stroke-width="1.2"/>
<path d="M621.3 279.3V282" stroke="#a81c1c" stroke-width="1.2"/>
<path d="M626.1 279.3V281" stroke="#1c8a1c" stroke-width="1.2"/>
<path d="M540.0 290.5V293.5" stroke="#1c8a1c" stroke-width="1.2"/>
<path d="M540.0 293.5V298.0" stroke="#a81c1c" stroke-width="1.2"/>
<path d="M544.8 290.0V293.5" stroke="#1c8a1c" stroke-width="1.2"/>
<path d="M544.8 293.5V297.4" stroke="#1c8a1c" stroke-width="1.2"/>
<path d="M549.5 291.6V293.5" stroke="#a81c1c" stroke-width="1.2"/>
<path d="M549.5 293.5V294.9" stroke="#1c8a1c" stroke-width="1.2"/>
<path d="M554.3 290.8V293.5" stroke="#1c8a1c" stroke-width="1.2"/>
<path d="M554.3 293.5V297.8" stroke="#a81c1c" stroke-width="1.2"/>
<path d="M559.1 291.2V293.5" stroke="#1c8a1c" stroke-width="1.2"/>
<path d="M559.1 293.5V295.4" stroke="#a81c1c" stroke-width="1.2"/>
<path d="M563.9 292.2V293.5" stroke="#a81c1c" stroke-width="1.2"/>
<path d="M563.9 293.5V296.6" stroke="#a81c1c" stroke-width="1.2"/>
<path d="M568.6 291.4V293.5" stroke="#a81c1c" stroke-width="1.2"/>
<path d="M568.6 293.5V295.0" stroke="#1c8a1c" stroke-width="1.2"/>
<path d="M573.4 290.7V293.5" stroke="#1c8a1c" stroke-width="1.2"/>
<path d="M573.4 293.5V296.8" stroke="#1c8a1c" stroke-width="1.2"/>
<path d="M578.2 291.5V293.5" stroke="#1c8a1c" stroke-width="1.2"/>
<path d="M578.2 293.5V296.9" stroke="#1c8a1c" stroke-width="1.2"/>
<path d="M582.9 291.9V293.5" stroke="#1c8a1c" stroke-width="1.2"/>
<path d="M582.9 293.5V297.3" stroke="#1c8a1c" stroke-width="1.2"/>
<path d="M587.7 292.2V293.5" stroke="#a81c1c" stroke-width="1.2"/>
<path d="M587.7 293.5V295.9" stroke="#1c8a1c" stroke-width="1.2"/>
<path d="M592.5 292.2V293.5" stroke="#a81c1c" stroke-width="1.2"/>
<path d="M592.5 293.5V295.1" stroke="#a81c1c" stroke-width="1.2"/>
<path d="M597.2 291.7V293.5" stroke="#a81c1c" stroke-width="1.2"/>
<path d="M597.2 293.5V295.6" stroke="#1c8a1c" stroke-width="1.2"/>
<path d="M602.0 290.8V293.5" stroke="#a81c1c" stroke-width="1.2"/>
<path d="M602.0 293.5V295.8" stroke="#1c8a1c" stroke-width="1.2"/>
<path d="M606.8 289.5V293.5" stroke="#1c8a1c" stroke-width="1.2"/>
<path d="M606.8 293.5V295.8" stroke="#a81c1c" stroke-width="1.2"/>
<path d="M611.5 291.9V293.5" stroke="#1c8a1c" stroke-width="1.2"/>
<path d="M611.5 293.5V294.5" stroke="#a81c1c" stroke-width="1.2"/>
<path d="M616.3 290.0V293.5" stroke="#a81c1c" stroke-width="1.2"/>
<path d="M616.3 293.5V295.9" stroke="#1c8a1c" stroke-width="1.2"/>
<path d="M621.1 292.0V293.5" stroke="#a81c1c" stroke-width="1.2"/>
<path d="M621.1 293.5V294.6" stroke="#1c8a1c" stroke-width="1.2"/>
<path d="M625.9 289.8V293.5" stroke="#a81c1c" stroke-width="1.2"/>
<path d="M625.9 293.5V294.8" stroke="#a81c1c" stroke-width="1.2"/>
<path d="M630.6 291.0V293.5" stroke="#a81c1c" stroke-width="1.2"/>
<path d="M630.6 293.5V295.0" stroke="#1c8a1c" stroke-width="1.2"/>
<path d="M635.4 289.7V293.5" stroke="#1c8a1c" stroke-width="1.2"/>
<path d="M635.4 293.5V294.9" stroke="#a81c1c" stroke-width="1.2"/>
<path d="M640.2 289.6V293.5" stroke="#1c8a1c" stroke-width="1.2"/>
<path d="M640.2 293.5V295.2" stroke="#a81c1c" stroke-width="1.2"/>
<path d="M644.9 289.6V293.5" stroke="#1c8a1c" stroke-width="1.2"/>
<path d="M644.9 293.5V296.2" stroke="#a81c1c" stroke-width="1.2"/>
<path d="M649.7 291.3V293.5" stroke="#1c8a1c" stroke-width="1.2"/>
<path d="M649.7 293.5V297.7" stroke="#a81c1c" stroke-width="1.2"/>
<path d="M654.5 292.0V293.5" stroke="#a81c1c" stroke-width="1.2"/>
<path d="M654.5 293.5V297.3" stroke="#a81c1c" stroke-width="1.2"/>
<path d="M637 206h3l-1.5 2z" fill="#808890"/>
<path d="M456 208.1h4l-2 2.4z" fill="#e8e8e8"/>
<text x="462.5" y="211.4" font-size="5.6" fill="#f0f0ec" xml:space="preserve">USDCHF,M1  <tspan dx="1">0.95024 0.95025 0.95005 0.95023</tspan></text>
<text x="456" y="267.3" font-size="5.5" fill="#d8d8d8" text-anchor="start">AO -0.000606</text>
<text x="456" y="282" font-size="5.5" fill="#d8d8d8" text-anchor="start">AC 0.0001887</text>
<text x="456" y="295.5" font-size="5.5" fill="#d8d8d8" text-anchor="start">Gator(13,8,5) 0.000468 -0.000232</text>
<path d="M684.5 216.8h2" stroke="#c0c0c0" stroke-width="0.8"/>
<text x="688" y="218.8" font-size="5.4" fill="#e0e0dc" text-anchor="start">0.95160</text>
<path d="M684.5 236.5h2" stroke="#c0c0c0" stroke-width="0.8"/>
<text x="688" y="238.5" font-size="5.4" fill="#e0e0dc" text-anchor="start">0.95065</text>
<path d="M684.5 255.60000000000002h2" stroke="#c0c0c0" stroke-width="0.8"/>
<text x="688" y="257.6" font-size="5.4" fill="#e0e0dc" text-anchor="start">0.94970</text>
<rect x="686" y="242.3" width="22.5" height="6" fill="#fff"/>
<text x="687.5" y="247.10000000000002" font-size="5.5" fill="#000" text-anchor="start">0.95023</text>
<text x="687" y="263.5" font-size="5.2" fill="#e0e0dc" text-anchor="start">0.0008</text>
<text x="687" y="269" font-size="5.2" fill="#e0e0dc" text-anchor="start">-0.001185</text>
<text x="687" y="278.5" font-size="5.2" fill="#e0e0dc" text-anchor="start">0.0002126</text>
<text x="687" y="284" font-size="5.2" fill="#e0e0dc" text-anchor="start">-0.000318</text>
<text x="687" y="292.5" font-size="5.2" fill="#e0e0dc" text-anchor="start">0.000551</text>
<text x="687" y="298" font-size="5.2" fill="#e0e0dc" text-anchor="start">-0.000462</text>
<path d="M453 301v2" stroke="#c0c0c0" stroke-width="0.8"/>
<text x="453" y="308.6" font-size="5.4" fill="#e0e0dc" text-anchor="start">18 Jun 2020</text>
<path d="M492 301v2" stroke="#c0c0c0" stroke-width="0.8"/>
<text x="492" y="308.6" font-size="5.4" fill="#e0e0dc" text-anchor="start">18 Jun 17:55</text>
<path d="M530 301v2" stroke="#c0c0c0" stroke-width="0.8"/>
<text x="530" y="308.6" font-size="5.4" fill="#e0e0dc" text-anchor="start">18 Jun 18:03</text>
<path d="M569 301v2" stroke="#c0c0c0" stroke-width="0.8"/>
<text x="569" y="308.6" font-size="5.4" fill="#e0e0dc" text-anchor="start">18 Jun 18:11</text>
<path d="M607 301v2" stroke="#c0c0c0" stroke-width="0.8"/>
<text x="607" y="308.6" font-size="5.4" fill="#e0e0dc" text-anchor="start">18 Jun 18:19</text>
</svg>
<div style="position:absolute;left:172px;top:320px;width:548px;height:14px;background:#f0f0f0;"></div>
<div style="position:absolute;left:173px;top:320.3px;width:546px;height:1px;background:#606870;"></div>
<div style="position:absolute;left:173px;top:320px;width:1.2px;height:12.5px;background:#7a7a7a;"></div>
<div class="t" style="position:absolute;left:184px;top:324.8px;font-size:6.8px;line-height:6.8px;color:#a0a0a0;white-space:pre;">USDJPY,M1</div>
<div style="position:absolute;left:227.5px;top:320px;width:49px;height:12.5px;background:#fff;border:1px solid #606060;border-top:none;"></div>
<div class="t" style="position:absolute;left:233px;top:324.8px;font-size:6.8px;line-height:6.8px;color:#1a1a1a;white-space:pre;">EURGBP,H4</div>
<div class="t" style="position:absolute;left:284px;top:324.8px;font-size:6.8px;line-height:6.8px;color:#a0a0a0;white-space:pre;">NZDCAD,Daily</div>
<div style="position:absolute;left:337px;top:322px;width:1px;height:9px;background:#a0a0a0;"></div>
<div class="t" style="position:absolute;left:344px;top:324.8px;font-size:6.8px;line-height:6.8px;color:#a0a0a0;white-space:pre;">USDCHF,M1</div>
<div style="position:absolute;left:390px;top:322px;width:1px;height:9px;background:#a0a0a0;"></div>
<svg style="left:700px;top:324px" width="4" height="5"><path d="M3 0.5L0.8 2.5 3 4.5z" fill="#8a8a8a"/></svg>
<svg style="left:711px;top:324px" width="4" height="5"><path d="M1 0.5L3.2 2.5 1 4.5z" fill="#8a8a8a"/></svg>
<div style="position:absolute;left:1px;top:333.5px;width:718px;height:1px;background:#fff;"></div>
<div style="position:absolute;left:1px;top:331px;width:171px;height:3px;background:#f0f0f0;"></div>
<div style="position:absolute;left:1px;top:334px;width:718px;height:59px;background:#f0f0f0;"></div>
<svg style="left:2px;top:335.5px" width="7" height="7"><path d="M1 1L5 5M5 1L1 5" stroke="#202020" stroke-width="1.2"/></svg>
<div style="position:absolute;left:1px;top:359.5px;width:9px;height:31.5px;background:#e4ebf2;border-right:1px solid #c0ccd8;"></div>
<div style="position:absolute;left:1px;top:359px;width:9px;height:32px;"><div style="position:absolute;left:-12px;top:12px;width:32px;height:8px;transform:rotate(-90deg);font-size:6.6px;line-height:8px;color:#1a1a1a;text-align:center;white-space:pre;">Терминал</div></div>
<div style="position:absolute;left:10px;top:335px;width:709px;height:43px;background:#fff;border-left:1px solid #c8c8c8;"></div>
<div style="position:absolute;left:622.5px;top:335px;width:1px;height:15px;background:#e4e4e4;"></div>
<div class="t" style="position:absolute;left:14px;top:340px;font-size:6.8px;line-height:6.8px;color:#1a1a1a;white-space:pre;letter-spacing:0.25px;">Тема</div>
<div class="t" style="position:absolute;right:16.5px;top:340px;font-size:6.8px;line-height:6.8px;color:#1a1a1a;white-space:pre;text-align:right;letter-spacing:0.25px;">Время</div>
<div style="position:absolute;left:11px;top:350px;width:696px;height:11.5px;background:#e6e6e6;"></div>
<div style="position:absolute;left:11px;top:361.5px;width:696px;height:1px;background:#f4f4f4;"></div>
<div style="position:absolute;left:11px;top:362px;width:696px;height:16px;background:#fff;"></div>
<svg style="left:12px;top:352px" width="8" height="8"><rect x="0.5" y="0.5" width="7" height="7.5" rx="1" fill="#f0c840" stroke="#b89020" stroke-width="0.8"/><path d="M4 1.5l2 2.5-2 2.5" stroke="#fff" stroke-width="0.6" fill="none"/></svg>
<div class="t" style="position:absolute;left:23px;top:353.5px;font-size:6.8px;line-height:6.8px;color:#1a1a1a;white-space:pre;">FxWirePro: Sell CHFJPY on rallies</div>
<div class="t" style="position:absolute;right:15px;top:353.5px;font-size:6.5px;line-height:6.5px;color:#1a1a1a;white-space:pre;text-align:right;">2020.06.18 18:00:00</div>
<svg style="left:12px;top:364px" width="8" height="8"><rect x="0.5" y="0.5" width="7" height="7.5" rx="1" fill="#f0c840" stroke="#b89020" stroke-width="0.8"/><path d="M4 1.5l2 2.5-2 2.5" stroke="#fff" stroke-width="0.6" fill="none"/></svg>
<div class="t" style="position:absolute;left:23px;top:365.5px;font-size:6.8px;line-height:6.8px;color:#1a1a1a;white-space:pre;letter-spacing:0.25px;">Межбанковские валютные курсы на 14:50 по Гринвичу</div>
<div class="t" style="position:absolute;right:15px;top:365.5px;font-size:6.5px;line-height:6.5px;color:#1a1a1a;white-space:pre;text-align:right;">2020.06.18 17:50:00</div>
<svg style="left:12px;top:376px" width="8" height="8"><rect x="0.5" y="0.5" width="7" height="7.5" rx="1" fill="#f0c840" stroke="#b89020" stroke-width="0.8"/><path d="M4 1.5l2 2.5-2 2.5" stroke="#fff" stroke-width="0.6" fill="none"/></svg>
<div class="t" style="position:absolute;left:23px;top:377.5px;font-size:6.8px;line-height:6.8px;color:#1a1a1a;white-space:pre;">FXWirePro: Sell GBPJPY on rallies</div>
<div class="t" style="position:absolute;right:15px;top:377.5px;font-size:6.5px;line-height:6.5px;color:#1a1a1a;white-space:pre;text-align:right;">2020.06.18 17:41:12</div>
<div style="position:absolute;left:707px;top:335px;width:11px;height:43px;background:#f0f0f0;"></div>
<svg style="left:708px;top:338px" width="8" height="6"><path d="M1 4.5L4 1.5L7 4.5" stroke="#606060" stroke-width="1.1" fill="none"/></svg>
<svg style="left:708px;top:370.5px" width="8" height="6"><path d="M1 1.5L4 4.5L7 1.5" stroke="#606060" stroke-width="1.1" fill="none"/></svg>
<div style="position:absolute;left:708px;top:346px;width:9px;height:10px;background:#cdcdcd;"></div>
<div style="position:absolute;left:11px;top:374.5px;width:696px;height:1px;background:#ececec;"></div>
<div style="position:absolute;left:10px;top:377.5px;width:709px;height:1px;background:#505050;"></div>
<div style="position:absolute;left:10px;top:378.5px;width:709px;height:14px;background:#f0f0f0;"></div>
<div style="position:absolute;left:10px;top:378.5px;width:709px;height:14px;background:#f0f0f0;"></div>
<div class="t" style="position:absolute;left:18px;top:382px;font-size:6.8px;line-height:6.8px;color:#a0a0a0;white-space:pre;letter-spacing:0.25px;">Торговля</div>
<div class="t" style="position:absolute;left:60.5px;top:382px;font-size:6.8px;line-height:6.8px;color:#a0a0a0;white-space:pre;letter-spacing:0.25px;">Активы</div>
<div class="t" style="position:absolute;left:97px;top:382px;font-size:6.8px;line-height:6.8px;color:#a0a0a0;white-space:pre;letter-spacing:0.25px;">История Счета</div>
<div class="t" style="position:absolute;left:206px;top:382px;font-size:6.8px;line-height:6.8px;color:#a0a0a0;white-space:pre;letter-spacing:0.25px;">Алерты</div>
<div class="t" style="position:absolute;left:242.5px;top:382px;font-size:6.8px;line-height:6.8px;color:#a0a0a0;white-space:pre;letter-spacing:0.25px;">Почта</div>
<div class="t" style="position:absolute;left:279px;top:382px;font-size:6.8px;line-height:6.8px;color:#a0a0a0;white-space:pre;letter-spacing:0.25px;">Маркет</div>
<div class="t" style="position:absolute;left:326px;top:382px;font-size:6.8px;line-height:6.8px;color:#a0a0a0;white-space:pre;letter-spacing:0.25px;">Сигналы</div>
<div class="t" style="position:absolute;left:367px;top:382px;font-size:6.8px;line-height:6.8px;color:#a0a0a0;white-space:pre;letter-spacing:0.25px;">Статьи</div>
<div class="t" style="position:absolute;left:401px;top:382px;font-size:6.8px;line-height:6.8px;color:#a0a0a0;white-space:pre;letter-spacing:0.25px;">Библиотека</div>
<div class="t" style="position:absolute;left:452px;top:382px;font-size:6.8px;line-height:6.8px;color:#a0a0a0;white-space:pre;letter-spacing:0.25px;">Эксперты</div>
<div class="t" style="position:absolute;left:495px;top:382px;font-size:6.8px;line-height:6.8px;color:#a0a0a0;white-space:pre;letter-spacing:0.25px;">Журнал</div>
<div style="position:absolute;left:54.5px;top:381px;width:1px;height:9px;background:#a0a0a0;"></div>
<div style="position:absolute;left:91px;top:381px;width:1px;height:9px;background:#a0a0a0;"></div>
<div style="position:absolute;left:237px;top:381px;width:1px;height:9px;background:#a0a0a0;"></div>
<div style="position:absolute;left:273.3px;top:381px;width:1px;height:9px;background:#a0a0a0;"></div>
<div style="position:absolute;left:319.3px;top:381px;width:1px;height:9px;background:#a0a0a0;"></div>
<div style="position:absolute;left:362px;top:381px;width:1px;height:9px;background:#a0a0a0;"></div>
<div style="position:absolute;left:395.8px;top:381px;width:1px;height:9px;background:#a0a0a0;"></div>
<div style="position:absolute;left:446.3px;top:381px;width:1px;height:9px;background:#a0a0a0;"></div>
<div style="position:absolute;left:490px;top:381px;width:1px;height:9px;background:#a0a0a0;"></div>
<div style="position:absolute;left:528.8px;top:381px;width:1px;height:9px;background:#a0a0a0;"></div>
<div class="t" style="position:absolute;left:264px;top:384.8px;font-size:5.6px;line-height:5.6px;color:#e02020;white-space:pre;font-weight:bold;">3</div>
<div class="t" style="position:absolute;left:304.5px;top:384.8px;font-size:5.6px;line-height:5.6px;color:#e02020;white-space:pre;font-weight:bold;">122</div>
<div style="position:absolute;left:151.5px;top:377.5px;width:47px;height:12.5px;background:#fff;border:1px solid #606060;border-top:none;"></div>
<div class="t" style="position:absolute;left:157px;top:382px;font-size:6.8px;line-height:6.8px;color:#1a1a1a;white-space:pre;letter-spacing:0.25px;">Новости</div>
<div class="t" style="position:absolute;left:186.5px;top:384.8px;font-size:5.6px;line-height:5.6px;color:#e02020;white-space:pre;font-weight:bold;">99</div>
<div style="position:absolute;left:1px;top:393px;width:718px;height:14px;background:#f0f0f0;border-top:1px solid #d8d8d8;"></div>
<div class="t" style="position:absolute;left:2px;top:398.8px;font-size:6.9px;line-height:6.9px;color:#1a1a1a;white-space:pre;letter-spacing:0.05px;">Для вызова справки нажмите F1</div>
<div style="position:absolute;left:292.5px;top:395px;width:1px;height:12px;background:#c8c8c8;"></div>
<div style="position:absolute;left:362px;top:395px;width:1px;height:12px;background:#c8c8c8;"></div>
<div style="position:absolute;left:423.8px;top:395px;width:1px;height:12px;background:#c8c8c8;"></div>
<div style="position:absolute;left:465.5px;top:395px;width:1px;height:12px;background:#c8c8c8;"></div>
<div style="position:absolute;left:508.8px;top:395px;width:1px;height:12px;background:#c8c8c8;"></div>
<div style="position:absolute;left:549.5px;top:395px;width:1px;height:12px;background:#c8c8c8;"></div>
<div style="position:absolute;left:591.3px;top:395px;width:1px;height:12px;background:#c8c8c8;"></div>
<div style="position:absolute;left:630.5px;top:395px;width:1px;height:12px;background:#c8c8c8;"></div>
<div class="t" style="position:absolute;left:296px;top:398.5px;font-size:6.9px;line-height:6.9px;color:#1a1a1a;white-space:pre;">Market Overview</div>
<svg style="left:634px;top:396px" width="15" height="10"><rect x="0" y="0" width="1.2" height="10" fill="#2a6aa8"/><rect x="0" y="0" width="1.2" height="7.0" fill="#90b830"/><rect x="2" y="0" width="1.2" height="10" fill="#2a6aa8"/><rect x="2" y="0" width="1.2" height="6.0" fill="#90b830"/><rect x="4" y="0" width="1.2" height="10" fill="#2a6aa8"/><rect x="4" y="0" width="1.2" height="5.0" fill="#90b830"/><rect x="6" y="0" width="1.2" height="10" fill="#2a6aa8"/><rect x="6" y="0" width="1.2" height="4.0" fill="#90b830"/><rect x="8" y="0" width="1.2" height="10" fill="#2a6aa8"/><rect x="8" y="0" width="1.2" height="3.0" fill="#90b830"/><rect x="10" y="0" width="1.2" height="10" fill="#2a6aa8"/><rect x="10" y="0" width="1.2" height="2.0" fill="#90b830"/><rect x="12" y="0" width="1.2" height="10" fill="#2a6aa8"/><rect x="12" y="0" width="1.2" height="1.0" fill="#90b830"/></svg>
<div class="t" style="position:absolute;left:650px;top:398.5px;font-size:6.9px;line-height:6.9px;color:#1a1a1a;white-space:pre;">3358/2 kb</div>
<svg style="left:709px;top:398px" width="9" height="9"><path d="M8 2L2 8M8 5L5 8" stroke="#a0a0a0" stroke-width="0.8"/></svg>
<div style="position:absolute;left:1px;top:18px;width:1px;height:389px;background:#d4e6f8;"></div>
<div style="position:absolute;left:718.6px;top:18px;width:0.4px;height:389px;background:#d0e0f0;"></div>
</body></html>
